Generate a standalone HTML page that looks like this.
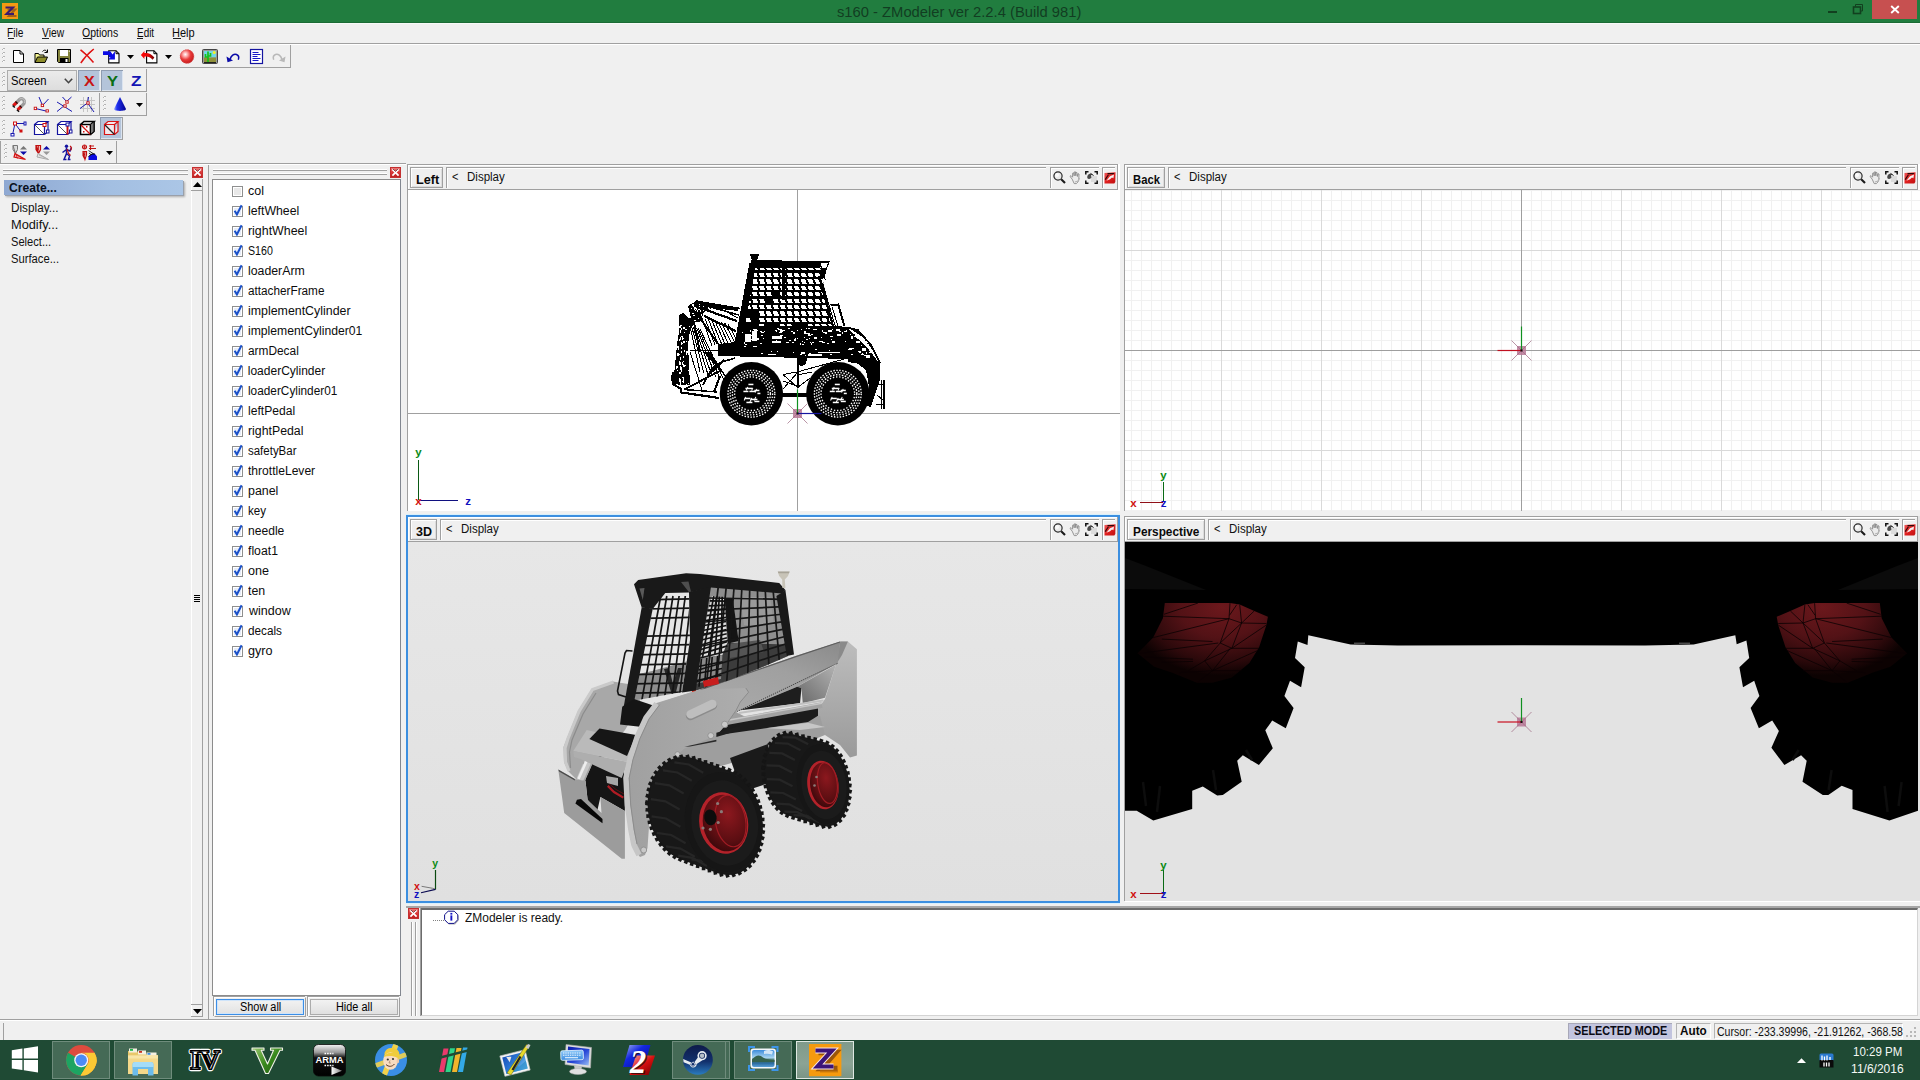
<!DOCTYPE html>
<html><head><meta charset="utf-8"><title>s160 - ZModeler ver 2.2.4 (Build 981)</title>
<style>
*{box-sizing:border-box;margin:0;padding:0}
html,body{width:1920px;height:1080px;overflow:hidden;background:#f0f0f0;font-family:"Liberation Sans",sans-serif;font-size:12px;color:#000}
.a{position:absolute}
.t{position:absolute;white-space:nowrap;transform-origin:0 0;display:block}
.t u{text-decoration:none}
svg{display:block;overflow:visible}
</style></head><body>
<!-- p_chrome.chrome -->
<div class="a" style="left:0px;top:0px;width:1920px;height:22px;background:#217d3f;"></div>
<div class="a" style="left:0px;top:22px;width:1920px;height:1px;background:#1b6b35;"></div>
<div class="a" style="left:0px;top:23px;width:1920px;height:1px;background:#f7faf7;"></div>
<svg class="a" style="left:2px;top:3px" width="16" height="16" viewBox="0 0 16 16"><rect width="16" height="16" fill="#f39a12"/><path d="M5.5 6.5h7.5l-6 6.5h7.5" stroke="#a0611a" stroke-width="2.2" fill="none"/><path d="M3.5 4.5h7.5l-6.5 6.5h7.5" stroke="#3a1a6e" stroke-width="2.1" fill="none"/></svg>
<span class="t" style="left:837.07px;top:4.30px;font-size:15px;line-height:15px;color:#123d22;transform:scaleX(0.9833);">s160 - ZModeler ver 2.2.4 (Build 981)</span>
<div class="a" style="left:1828px;top:11px;width:9px;height:2px;background:#12401f;"></div>
<svg class="a" style="left:1852px;top:3px" width="12" height="12" viewBox="0 0 12 12"><path d="M3.5 3.5v-2h7v6.5h-2" stroke="#12401f" stroke-width="1" fill="none"/><rect x="1.5" y="4" width="7" height="6.5" fill="none" stroke="#12401f" stroke-width="1.6"/></svg>
<div class="a" style="left:1872px;top:0px;width:45px;height:19px;background:#c75050;"></div>
<svg class="a" style="left:1890px;top:5px" width="10" height="9" viewBox="0 0 10 9"><path d="M1.2 1l7.6 7M8.8 1l-7.6 7" stroke="#fff" stroke-width="1.9"/></svg>
<div class="a" style="left:0px;top:24px;width:1920px;height:19px;background:#f0f0f0;"></div>
<span class="t" style="left:7.41px;top:26.84px;font-size:12px;line-height:12px;color:#0a0a0a;transform:scaleX(0.8418);">File</span>
<span class="t" style="left:42.15px;top:26.84px;font-size:12px;line-height:12px;color:#0a0a0a;transform:scaleX(0.8544);">View</span>
<span class="t" style="left:82.31px;top:26.84px;font-size:12px;line-height:12px;color:#0a0a0a;transform:scaleX(0.8743);">Options</span>
<span class="t" style="left:136.72px;top:26.84px;font-size:12px;line-height:12px;color:#0a0a0a;transform:scaleX(0.8279);">Edit</span>
<span class="t" style="left:172.24px;top:26.84px;font-size:12px;line-height:12px;color:#0a0a0a;transform:scaleX(0.9161);">Help</span>
<div class="a" style="left:8px;top:38px;width:6px;height:1px;background:#222;"></div>
<div class="a" style="left:42px;top:38px;width:7px;height:1px;background:#222;"></div>
<div class="a" style="left:83px;top:38px;width:8px;height:1px;background:#222;"></div>
<div class="a" style="left:137px;top:38px;width:6px;height:1px;background:#222;"></div>
<div class="a" style="left:173px;top:38px;width:8px;height:1px;background:#222;"></div>
<div class="a" style="left:0px;top:43px;width:1920px;height:1px;background:#a0a0a0;"></div>
<div class="a" style="left:0px;top:44px;width:1920px;height:1px;background:#fff;"></div>
<!-- p_chrome.toolbars -->
<div class="a" style="left:0px;top:67px;width:291px;height:1px;background:#a0a0a0;"></div><div class="a" style="left:290px;top:45px;width:1px;height:23px;background:#a0a0a0;"></div>
<div class="a" style="left:3px;top:48px;width:2px;height:1px;background:#b4b4b4;"></div><div class="a" style="left:2px;top:49px;width:1px;height:1px;background:#b4b4b4;"></div><div class="a" style="left:3px;top:49px;width:1px;height:1px;background:#fff;"></div><div class="a" style="left:3px;top:52px;width:2px;height:1px;background:#b4b4b4;"></div><div class="a" style="left:2px;top:53px;width:1px;height:1px;background:#b4b4b4;"></div><div class="a" style="left:3px;top:53px;width:1px;height:1px;background:#fff;"></div><div class="a" style="left:3px;top:56px;width:2px;height:1px;background:#b4b4b4;"></div><div class="a" style="left:2px;top:57px;width:1px;height:1px;background:#b4b4b4;"></div><div class="a" style="left:3px;top:57px;width:1px;height:1px;background:#fff;"></div><div class="a" style="left:3px;top:60px;width:2px;height:1px;background:#b4b4b4;"></div><div class="a" style="left:2px;top:61px;width:1px;height:1px;background:#b4b4b4;"></div><div class="a" style="left:3px;top:61px;width:1px;height:1px;background:#fff;"></div>
<svg class="a" style="left:126.5px;top:54.5px" width="7" height="4" viewBox="0 0 7 4"><path d="M0 0h7l-3.5 4z" fill="#000"/></svg>
<svg class="a" style="left:164.5px;top:54.5px" width="7" height="4" viewBox="0 0 7 4"><path d="M0 0h7l-3.5 4z" fill="#000"/></svg>
<div class="a" style="left:0px;top:91px;width:147px;height:1px;background:#a0a0a0;"></div><div class="a" style="left:146px;top:69px;width:1px;height:23px;background:#a0a0a0;"></div>
<div class="a" style="left:3px;top:72px;width:2px;height:1px;background:#b4b4b4;"></div><div class="a" style="left:2px;top:73px;width:1px;height:1px;background:#b4b4b4;"></div><div class="a" style="left:3px;top:73px;width:1px;height:1px;background:#fff;"></div><div class="a" style="left:3px;top:76px;width:2px;height:1px;background:#b4b4b4;"></div><div class="a" style="left:2px;top:77px;width:1px;height:1px;background:#b4b4b4;"></div><div class="a" style="left:3px;top:77px;width:1px;height:1px;background:#fff;"></div><div class="a" style="left:3px;top:80px;width:2px;height:1px;background:#b4b4b4;"></div><div class="a" style="left:2px;top:81px;width:1px;height:1px;background:#b4b4b4;"></div><div class="a" style="left:3px;top:81px;width:1px;height:1px;background:#fff;"></div><div class="a" style="left:3px;top:84px;width:2px;height:1px;background:#b4b4b4;"></div><div class="a" style="left:2px;top:85px;width:1px;height:1px;background:#b4b4b4;"></div><div class="a" style="left:3px;top:85px;width:1px;height:1px;background:#fff;"></div>
<div class="a" style="left:7px;top:70px;width:70px;height:21px;background:linear-gradient(#ebebeb,#dddddd);border:1px solid #adadad;"></div>
<span class="t" style="left:10.67px;top:74.84px;font-size:12px;line-height:12px;color:#000;transform:scaleX(0.9333);">Screen</span>
<svg class="a" style="left:64px;top:78px" width="9" height="6" viewBox="0 0 9 6"><path d="M0.8 0.8l3.7 3.9l3.7-3.9" stroke="#444" stroke-width="1.6" fill="none"/></svg>
<div class="a" style="left:78px;top:70px;width:22px;height:21px;background:#b4c4da;box-shadow:inset 1px 1px 0 #8f9cb0, inset -1px -1px 0 #dbe4f0;"></div>
<div class="a" style="left:101px;top:70px;width:22px;height:21px;background:#b4c4da;box-shadow:inset 1px 1px 0 #8f9cb0, inset -1px -1px 0 #dbe4f0;"></div>
<span class="t" style="left:84.37px;top:73.30px;font-size:15px;line-height:15px;color:#c81414;font-weight:bold;transform:scaleX(1.0769);">X</span>
<span class="t" style="left:106.72px;top:73.30px;font-size:15px;line-height:15px;color:#0a6e14;font-weight:bold;transform:scaleX(1.1053);">Y</span>
<span class="t" style="left:130.50px;top:73.30px;font-size:15px;line-height:15px;color:#1414b4;font-weight:bold;transform:scaleX(1.1429);">Z</span>
<div class="a" style="left:0px;top:115px;width:100px;height:1px;background:#a0a0a0;"></div><div class="a" style="left:99px;top:93px;width:1px;height:23px;background:#a0a0a0;"></div>
<div class="a" style="left:3px;top:96px;width:2px;height:1px;background:#b4b4b4;"></div><div class="a" style="left:2px;top:97px;width:1px;height:1px;background:#b4b4b4;"></div><div class="a" style="left:3px;top:97px;width:1px;height:1px;background:#fff;"></div><div class="a" style="left:3px;top:100px;width:2px;height:1px;background:#b4b4b4;"></div><div class="a" style="left:2px;top:101px;width:1px;height:1px;background:#b4b4b4;"></div><div class="a" style="left:3px;top:101px;width:1px;height:1px;background:#fff;"></div><div class="a" style="left:3px;top:104px;width:2px;height:1px;background:#b4b4b4;"></div><div class="a" style="left:2px;top:105px;width:1px;height:1px;background:#b4b4b4;"></div><div class="a" style="left:3px;top:105px;width:1px;height:1px;background:#fff;"></div><div class="a" style="left:3px;top:108px;width:2px;height:1px;background:#b4b4b4;"></div><div class="a" style="left:2px;top:109px;width:1px;height:1px;background:#b4b4b4;"></div><div class="a" style="left:3px;top:109px;width:1px;height:1px;background:#fff;"></div>
<div class="a" style="left:100px;top:115px;width:47px;height:1px;background:#a0a0a0;"></div><div class="a" style="left:146px;top:93px;width:1px;height:23px;background:#a0a0a0;"></div>
<div class="a" style="left:104px;top:96px;width:2px;height:1px;background:#b4b4b4;"></div><div class="a" style="left:103px;top:97px;width:1px;height:1px;background:#b4b4b4;"></div><div class="a" style="left:104px;top:97px;width:1px;height:1px;background:#fff;"></div><div class="a" style="left:104px;top:100px;width:2px;height:1px;background:#b4b4b4;"></div><div class="a" style="left:103px;top:101px;width:1px;height:1px;background:#b4b4b4;"></div><div class="a" style="left:104px;top:101px;width:1px;height:1px;background:#fff;"></div><div class="a" style="left:104px;top:104px;width:2px;height:1px;background:#b4b4b4;"></div><div class="a" style="left:103px;top:105px;width:1px;height:1px;background:#b4b4b4;"></div><div class="a" style="left:104px;top:105px;width:1px;height:1px;background:#fff;"></div><div class="a" style="left:104px;top:108px;width:2px;height:1px;background:#b4b4b4;"></div><div class="a" style="left:103px;top:109px;width:1px;height:1px;background:#b4b4b4;"></div><div class="a" style="left:104px;top:109px;width:1px;height:1px;background:#fff;"></div>
<svg class="a" style="left:135.5px;top:102.5px" width="7" height="4" viewBox="0 0 7 4"><path d="M0 0h7l-3.5 4z" fill="#000"/></svg>
<div class="a" style="left:0px;top:139px;width:123px;height:1px;background:#a0a0a0;"></div><div class="a" style="left:122px;top:117px;width:1px;height:23px;background:#a0a0a0;"></div>
<div class="a" style="left:3px;top:120px;width:2px;height:1px;background:#b4b4b4;"></div><div class="a" style="left:2px;top:121px;width:1px;height:1px;background:#b4b4b4;"></div><div class="a" style="left:3px;top:121px;width:1px;height:1px;background:#fff;"></div><div class="a" style="left:3px;top:124px;width:2px;height:1px;background:#b4b4b4;"></div><div class="a" style="left:2px;top:125px;width:1px;height:1px;background:#b4b4b4;"></div><div class="a" style="left:3px;top:125px;width:1px;height:1px;background:#fff;"></div><div class="a" style="left:3px;top:128px;width:2px;height:1px;background:#b4b4b4;"></div><div class="a" style="left:2px;top:129px;width:1px;height:1px;background:#b4b4b4;"></div><div class="a" style="left:3px;top:129px;width:1px;height:1px;background:#fff;"></div><div class="a" style="left:3px;top:132px;width:2px;height:1px;background:#b4b4b4;"></div><div class="a" style="left:2px;top:133px;width:1px;height:1px;background:#b4b4b4;"></div><div class="a" style="left:3px;top:133px;width:1px;height:1px;background:#fff;"></div>
<div class="a" style="left:100px;top:117px;width:22px;height:22px;background:#b4c4da;box-shadow:inset 1px 1px 0 #8f9cb0, inset -1px -1px 0 #dbe4f0;"></div>
<div class="a" style="left:0px;top:163px;width:117px;height:1px;background:#a0a0a0;"></div><div class="a" style="left:116px;top:141px;width:1px;height:23px;background:#a0a0a0;"></div><div class="a" style="left:0px;top:141px;width:1px;height:23px;background:#a0a0a0;"></div>
<div class="a" style="left:5px;top:144px;width:2px;height:1px;background:#b4b4b4;"></div><div class="a" style="left:4px;top:145px;width:1px;height:1px;background:#b4b4b4;"></div><div class="a" style="left:5px;top:145px;width:1px;height:1px;background:#fff;"></div><div class="a" style="left:5px;top:148px;width:2px;height:1px;background:#b4b4b4;"></div><div class="a" style="left:4px;top:149px;width:1px;height:1px;background:#b4b4b4;"></div><div class="a" style="left:5px;top:149px;width:1px;height:1px;background:#fff;"></div><div class="a" style="left:5px;top:152px;width:2px;height:1px;background:#b4b4b4;"></div><div class="a" style="left:4px;top:153px;width:1px;height:1px;background:#b4b4b4;"></div><div class="a" style="left:5px;top:153px;width:1px;height:1px;background:#fff;"></div><div class="a" style="left:5px;top:156px;width:2px;height:1px;background:#b4b4b4;"></div><div class="a" style="left:4px;top:157px;width:1px;height:1px;background:#b4b4b4;"></div><div class="a" style="left:5px;top:157px;width:1px;height:1px;background:#fff;"></div>
<svg class="a" style="left:105.5px;top:150.5px" width="7" height="4" viewBox="0 0 7 4"><path d="M0 0h7l-3.5 4z" fill="#000"/></svg>
<div class="a" style="left:117px;top:163px;width:289px;height:1px;background:#a0a0a0;"></div>
<div class="a" style="left:0px;top:164px;width:406px;height:1px;background:#fff;"></div>
<!-- p_panels.leftpanel -->
<div class="a" style="left:3px;top:169px;width:185px;height:1px;background:#fff;"></div><div class="a" style="left:3px;top:170px;width:185px;height:1px;background:#a0a0a0;"></div><div class="a" style="left:3px;top:173px;width:185px;height:1px;background:#fff;"></div><div class="a" style="left:3px;top:174px;width:185px;height:1px;background:#a0a0a0;"></div>
<svg class="a" style="left:192px;top:167px" width="11" height="11" viewBox="0 0 11 11"><defs><linearGradient id="cx192" x1="0" y1="0" x2="0" y2="1"><stop offset="0" stop-color="#f08a8a"/><stop offset="0.45" stop-color="#dc3c3c"/><stop offset="1" stop-color="#b81818"/></linearGradient></defs><rect width="11" height="11" fill="url(#cx192)"/><rect x="0.5" y="0.5" width="10" height="10" fill="none" stroke="#c43030" stroke-width="1"/><path d="M2.4 2.4l6.2 6.2M8.6 2.4l-6.2 6.2" stroke="#fff" stroke-width="1.7"/><path d="M3 2l2.5 2.5M8 2L5.5 4.5" stroke="#401010" stroke-width="0.9" opacity="0.75"/></svg>
<div class="a" style="left:4px;top:180px;width:179px;height:15px;background:linear-gradient(90deg,#8ea8d2,#a3bfe2 60%,#abc6e6);box-shadow:1px 1px 0 #9aa0aa,2px 2px 2px rgba(0,0,0,0.28);"></div>
<span class="t" style="left:8.82px;top:182.02px;font-size:12.5px;line-height:12.5px;color:#0a1020;font-weight:bold;transform:scaleX(0.9688);">Create...</span>
<span class="t" style="left:10.68px;top:201.64px;font-size:12px;line-height:12px;color:#111;transform:scaleX(0.9798);">Display...</span>
<span class="t" style="left:10.60px;top:218.64px;font-size:12px;line-height:12px;color:#111;transform:scaleX(1.0651);">Modify...</span>
<span class="t" style="left:11.08px;top:235.64px;font-size:12px;line-height:12px;color:#111;transform:scaleX(0.9259);">Select...</span>
<span class="t" style="left:11.07px;top:252.64px;font-size:12px;line-height:12px;color:#111;transform:scaleX(0.9358);">Surface...</span>
<div class="a" style="left:191px;top:179px;width:1px;height:838px;background:#fff;"></div>
<div class="a" style="left:202px;top:179px;width:1px;height:838px;background:#a0a0a0;"></div>
<div class="a" style="left:191px;top:190px;width:11px;height:1px;background:#a0a0a0;"></div>
<div class="a" style="left:191px;top:1004px;width:11px;height:1px;background:#a0a0a0;"></div>
<div class="a" style="left:191px;top:1016px;width:12px;height:1px;background:#a0a0a0;"></div>
<svg class="a" style="left:192.5px;top:181.5px" width="9" height="5" viewBox="0 0 9 5"><path d="M0 5l4.5-5l4.5 5z" fill="#000"/></svg>
<svg class="a" style="left:192.5px;top:1008.5px" width="9" height="5" viewBox="0 0 9 5"><path d="M0 0h9l-4.5 5z" fill="#000"/></svg>
<div class="a" style="left:194px;top:595px;width:6px;height:1px;background:#000;"></div>
<div class="a" style="left:194px;top:597px;width:6px;height:1px;background:#000;"></div>
<div class="a" style="left:194px;top:599px;width:6px;height:1px;background:#000;"></div>
<div class="a" style="left:194px;top:601px;width:6px;height:1px;background:#000;"></div>
<div class="a" style="left:208px;top:165px;width:1px;height:854px;background:#a0a0a0;"></div>
<!-- p_panels.objpanel -->
<div class="a" style="left:213px;top:169px;width:174px;height:1px;background:#fff;"></div><div class="a" style="left:213px;top:170px;width:174px;height:1px;background:#a0a0a0;"></div><div class="a" style="left:213px;top:173px;width:174px;height:1px;background:#fff;"></div><div class="a" style="left:213px;top:174px;width:174px;height:1px;background:#a0a0a0;"></div>
<svg class="a" style="left:390px;top:167px" width="11" height="11" viewBox="0 0 11 11"><defs><linearGradient id="cx390" x1="0" y1="0" x2="0" y2="1"><stop offset="0" stop-color="#f08a8a"/><stop offset="0.45" stop-color="#dc3c3c"/><stop offset="1" stop-color="#b81818"/></linearGradient></defs><rect width="11" height="11" fill="url(#cx390)"/><rect x="0.5" y="0.5" width="10" height="10" fill="none" stroke="#c43030" stroke-width="1"/><path d="M2.4 2.4l6.2 6.2M8.6 2.4l-6.2 6.2" stroke="#fff" stroke-width="1.7"/><path d="M3 2l2.5 2.5M8 2L5.5 4.5" stroke="#401010" stroke-width="0.9" opacity="0.75"/></svg>
<div class="a" style="left:212px;top:179px;width:189px;height:817px;background:#fff;border:1px solid #8c8c8c;"></div>
<svg class="a" style="left:232px;top:184px" width="13" height="13" viewBox="0 0 13 13"><rect x="0.5" y="2.5" width="10" height="10" fill="#fff" stroke="#8e8f8f"/><rect x="2" y="4" width="7" height="7" fill="#e8e8e8"/></svg>
<span class="t" style="left:248.08px;top:184.84px;font-size:12px;line-height:12px;color:#0c0c0c;transform:scaleX(1.0382);">col</span>
<svg class="a" style="left:232px;top:204px" width="13" height="13" viewBox="0 0 13 13"><rect x="0.5" y="2.5" width="10" height="10" fill="#fff" stroke="#8e8f8f"/><rect x="2" y="4" width="7" height="7" fill="#e6ecf8"/><path d="M2.6 6.8L4.9 10.4L9.6 1.2" stroke="#1a50c8" stroke-width="2" fill="none" stroke-linejoin="miter"/></svg>
<span class="t" style="left:247.77px;top:204.84px;font-size:12px;line-height:12px;color:#0c0c0c;transform:scaleX(1.0240);">leftWheel</span>
<svg class="a" style="left:232px;top:224px" width="13" height="13" viewBox="0 0 13 13"><rect x="0.5" y="2.5" width="10" height="10" fill="#fff" stroke="#8e8f8f"/><rect x="2" y="4" width="7" height="7" fill="#e6ecf8"/><path d="M2.6 6.8L4.9 10.4L9.6 1.2" stroke="#1a50c8" stroke-width="2" fill="none" stroke-linejoin="miter"/></svg>
<span class="t" style="left:247.76px;top:224.84px;font-size:12px;line-height:12px;color:#0c0c0c;transform:scaleX(1.0314);">rightWheel</span>
<svg class="a" style="left:232px;top:244px" width="13" height="13" viewBox="0 0 13 13"><rect x="0.5" y="2.5" width="10" height="10" fill="#fff" stroke="#8e8f8f"/><rect x="2" y="4" width="7" height="7" fill="#e6ecf8"/><path d="M2.6 6.8L4.9 10.4L9.6 1.2" stroke="#1a50c8" stroke-width="2" fill="none" stroke-linejoin="miter"/></svg>
<span class="t" style="left:248.10px;top:244.84px;font-size:12px;line-height:12px;color:#0c0c0c;transform:scaleX(0.8868);">S160</span>
<svg class="a" style="left:232px;top:264px" width="13" height="13" viewBox="0 0 13 13"><rect x="0.5" y="2.5" width="10" height="10" fill="#fff" stroke="#8e8f8f"/><rect x="2" y="4" width="7" height="7" fill="#e6ecf8"/><path d="M2.6 6.8L4.9 10.4L9.6 1.2" stroke="#1a50c8" stroke-width="2" fill="none" stroke-linejoin="miter"/></svg>
<span class="t" style="left:247.77px;top:264.84px;font-size:12px;line-height:12px;color:#0c0c0c;transform:scaleX(1.0258);">loaderArm</span>
<svg class="a" style="left:232px;top:284px" width="13" height="13" viewBox="0 0 13 13"><rect x="0.5" y="2.5" width="10" height="10" fill="#fff" stroke="#8e8f8f"/><rect x="2" y="4" width="7" height="7" fill="#e6ecf8"/><path d="M2.6 6.8L4.9 10.4L9.6 1.2" stroke="#1a50c8" stroke-width="2" fill="none" stroke-linejoin="miter"/></svg>
<span class="t" style="left:248.11px;top:284.84px;font-size:12px;line-height:12px;color:#0c0c0c;transform:scaleX(0.9797);">attacherFrame</span>
<svg class="a" style="left:232px;top:304px" width="13" height="13" viewBox="0 0 13 13"><rect x="0.5" y="2.5" width="10" height="10" fill="#fff" stroke="#8e8f8f"/><rect x="2" y="4" width="7" height="7" fill="#e6ecf8"/><path d="M2.6 6.8L4.9 10.4L9.6 1.2" stroke="#1a50c8" stroke-width="2" fill="none" stroke-linejoin="miter"/></svg>
<span class="t" style="left:247.76px;top:304.84px;font-size:12px;line-height:12px;color:#0c0c0c;transform:scaleX(1.0318);">implementCylinder</span>
<svg class="a" style="left:232px;top:324px" width="13" height="13" viewBox="0 0 13 13"><rect x="0.5" y="2.5" width="10" height="10" fill="#fff" stroke="#8e8f8f"/><rect x="2" y="4" width="7" height="7" fill="#e6ecf8"/><path d="M2.6 6.8L4.9 10.4L9.6 1.2" stroke="#1a50c8" stroke-width="2" fill="none" stroke-linejoin="miter"/></svg>
<span class="t" style="left:247.78px;top:324.84px;font-size:12px;line-height:12px;color:#0c0c0c;transform:scaleX(1.0146);">implementCylinder01</span>
<svg class="a" style="left:232px;top:344px" width="13" height="13" viewBox="0 0 13 13"><rect x="0.5" y="2.5" width="10" height="10" fill="#fff" stroke="#8e8f8f"/><rect x="2" y="4" width="7" height="7" fill="#e6ecf8"/><path d="M2.6 6.8L4.9 10.4L9.6 1.2" stroke="#1a50c8" stroke-width="2" fill="none" stroke-linejoin="miter"/></svg>
<span class="t" style="left:248.11px;top:344.84px;font-size:12px;line-height:12px;color:#0c0c0c;transform:scaleX(0.9888);">armDecal</span>
<svg class="a" style="left:232px;top:364px" width="13" height="13" viewBox="0 0 13 13"><rect x="0.5" y="2.5" width="10" height="10" fill="#fff" stroke="#8e8f8f"/><rect x="2" y="4" width="7" height="7" fill="#e6ecf8"/><path d="M2.6 6.8L4.9 10.4L9.6 1.2" stroke="#1a50c8" stroke-width="2" fill="none" stroke-linejoin="miter"/></svg>
<span class="t" style="left:247.79px;top:364.84px;font-size:12px;line-height:12px;color:#0c0c0c;">loaderCylinder</span>
<svg class="a" style="left:232px;top:384px" width="13" height="13" viewBox="0 0 13 13"><rect x="0.5" y="2.5" width="10" height="10" fill="#fff" stroke="#8e8f8f"/><rect x="2" y="4" width="7" height="7" fill="#e6ecf8"/><path d="M2.6 6.8L4.9 10.4L9.6 1.2" stroke="#1a50c8" stroke-width="2" fill="none" stroke-linejoin="miter"/></svg>
<span class="t" style="left:247.80px;top:384.84px;font-size:12px;line-height:12px;color:#0c0c0c;transform:scaleX(0.9846);">loaderCylinder01</span>
<svg class="a" style="left:232px;top:404px" width="13" height="13" viewBox="0 0 13 13"><rect x="0.5" y="2.5" width="10" height="10" fill="#fff" stroke="#8e8f8f"/><rect x="2" y="4" width="7" height="7" fill="#e6ecf8"/><path d="M2.6 6.8L4.9 10.4L9.6 1.2" stroke="#1a50c8" stroke-width="2" fill="none" stroke-linejoin="miter"/></svg>
<span class="t" style="left:247.78px;top:404.84px;font-size:12px;line-height:12px;color:#0c0c0c;transform:scaleX(1.0083);">leftPedal</span>
<svg class="a" style="left:232px;top:424px" width="13" height="13" viewBox="0 0 13 13"><rect x="0.5" y="2.5" width="10" height="10" fill="#fff" stroke="#8e8f8f"/><rect x="2" y="4" width="7" height="7" fill="#e6ecf8"/><path d="M2.6 6.8L4.9 10.4L9.6 1.2" stroke="#1a50c8" stroke-width="2" fill="none" stroke-linejoin="miter"/></svg>
<span class="t" style="left:247.77px;top:424.84px;font-size:12px;line-height:12px;color:#0c0c0c;transform:scaleX(1.0250);">rightPedal</span>
<svg class="a" style="left:232px;top:444px" width="13" height="13" viewBox="0 0 13 13"><rect x="0.5" y="2.5" width="10" height="10" fill="#fff" stroke="#8e8f8f"/><rect x="2" y="4" width="7" height="7" fill="#e6ecf8"/><path d="M2.6 6.8L4.9 10.4L9.6 1.2" stroke="#1a50c8" stroke-width="2" fill="none" stroke-linejoin="miter"/></svg>
<span class="t" style="left:248.30px;top:444.84px;font-size:12px;line-height:12px;color:#0c0c0c;transform:scaleX(0.9564);">safetyBar</span>
<svg class="a" style="left:232px;top:464px" width="13" height="13" viewBox="0 0 13 13"><rect x="0.5" y="2.5" width="10" height="10" fill="#fff" stroke="#8e8f8f"/><rect x="2" y="4" width="7" height="7" fill="#e6ecf8"/><path d="M2.6 6.8L4.9 10.4L9.6 1.2" stroke="#1a50c8" stroke-width="2" fill="none" stroke-linejoin="miter"/></svg>
<span class="t" style="left:248.41px;top:464.84px;font-size:12px;line-height:12px;color:#0c0c0c;transform:scaleX(1.0066);">throttleLever</span>
<svg class="a" style="left:232px;top:484px" width="13" height="13" viewBox="0 0 13 13"><rect x="0.5" y="2.5" width="10" height="10" fill="#fff" stroke="#8e8f8f"/><rect x="2" y="4" width="7" height="7" fill="#e6ecf8"/><path d="M2.6 6.8L4.9 10.4L9.6 1.2" stroke="#1a50c8" stroke-width="2" fill="none" stroke-linejoin="miter"/></svg>
<span class="t" style="left:247.82px;top:484.84px;font-size:12px;line-height:12px;color:#0c0c0c;transform:scaleX(1.0337);">panel</span>
<svg class="a" style="left:232px;top:504px" width="13" height="13" viewBox="0 0 13 13"><rect x="0.5" y="2.5" width="10" height="10" fill="#fff" stroke="#8e8f8f"/><rect x="2" y="4" width="7" height="7" fill="#e6ecf8"/><path d="M2.6 6.8L4.9 10.4L9.6 1.2" stroke="#1a50c8" stroke-width="2" fill="none" stroke-linejoin="miter"/></svg>
<span class="t" style="left:247.82px;top:504.84px;font-size:12px;line-height:12px;color:#0c0c0c;transform:scaleX(0.9650);">key</span>
<svg class="a" style="left:232px;top:524px" width="13" height="13" viewBox="0 0 13 13"><rect x="0.5" y="2.5" width="10" height="10" fill="#fff" stroke="#8e8f8f"/><rect x="2" y="4" width="7" height="7" fill="#e6ecf8"/><path d="M2.6 6.8L4.9 10.4L9.6 1.2" stroke="#1a50c8" stroke-width="2" fill="none" stroke-linejoin="miter"/></svg>
<span class="t" style="left:247.78px;top:524.84px;font-size:12px;line-height:12px;color:#0c0c0c;transform:scaleX(1.0072);">needle</span>
<svg class="a" style="left:232px;top:544px" width="13" height="13" viewBox="0 0 13 13"><rect x="0.5" y="2.5" width="10" height="10" fill="#fff" stroke="#8e8f8f"/><rect x="2" y="4" width="7" height="7" fill="#e6ecf8"/><path d="M2.6 6.8L4.9 10.4L9.6 1.2" stroke="#1a50c8" stroke-width="2" fill="none" stroke-linejoin="miter"/></svg>
<span class="t" style="left:248.47px;top:544.84px;font-size:12px;line-height:12px;color:#0c0c0c;transform:scaleX(1.0196);">float1</span>
<svg class="a" style="left:232px;top:564px" width="13" height="13" viewBox="0 0 13 13"><rect x="0.5" y="2.5" width="10" height="10" fill="#fff" stroke="#8e8f8f"/><rect x="2" y="4" width="7" height="7" fill="#e6ecf8"/><path d="M2.6 6.8L4.9 10.4L9.6 1.2" stroke="#1a50c8" stroke-width="2" fill="none" stroke-linejoin="miter"/></svg>
<span class="t" style="left:248.08px;top:564.84px;font-size:12px;line-height:12px;color:#0c0c0c;transform:scaleX(1.0492);">one</span>
<svg class="a" style="left:232px;top:584px" width="13" height="13" viewBox="0 0 13 13"><rect x="0.5" y="2.5" width="10" height="10" fill="#fff" stroke="#8e8f8f"/><rect x="2" y="4" width="7" height="7" fill="#e6ecf8"/><path d="M2.6 6.8L4.9 10.4L9.6 1.2" stroke="#1a50c8" stroke-width="2" fill="none" stroke-linejoin="miter"/></svg>
<span class="t" style="left:248.41px;top:584.84px;font-size:12px;line-height:12px;color:#0c0c0c;transform:scaleX(1.0317);">ten</span>
<svg class="a" style="left:232px;top:604px" width="13" height="13" viewBox="0 0 13 13"><rect x="0.5" y="2.5" width="10" height="10" fill="#fff" stroke="#8e8f8f"/><rect x="2" y="4" width="7" height="7" fill="#e6ecf8"/><path d="M2.6 6.8L4.9 10.4L9.6 1.2" stroke="#1a50c8" stroke-width="2" fill="none" stroke-linejoin="miter"/></svg>
<span class="t" style="left:248.60px;top:604.84px;font-size:12px;line-height:12px;color:#0c0c0c;transform:scaleX(1.0421);">window</span>
<svg class="a" style="left:232px;top:624px" width="13" height="13" viewBox="0 0 13 13"><rect x="0.5" y="2.5" width="10" height="10" fill="#fff" stroke="#8e8f8f"/><rect x="2" y="4" width="7" height="7" fill="#e6ecf8"/><path d="M2.6 6.8L4.9 10.4L9.6 1.2" stroke="#1a50c8" stroke-width="2" fill="none" stroke-linejoin="miter"/></svg>
<span class="t" style="left:248.11px;top:624.84px;font-size:12px;line-height:12px;color:#0c0c0c;transform:scaleX(0.9778);">decals</span>
<svg class="a" style="left:232px;top:644px" width="13" height="13" viewBox="0 0 13 13"><rect x="0.5" y="2.5" width="10" height="10" fill="#fff" stroke="#8e8f8f"/><rect x="2" y="4" width="7" height="7" fill="#e6ecf8"/><path d="M2.6 6.8L4.9 10.4L9.6 1.2" stroke="#1a50c8" stroke-width="2" fill="none" stroke-linejoin="miter"/></svg>
<span class="t" style="left:248.07px;top:644.84px;font-size:12px;line-height:12px;color:#0c0c0c;transform:scaleX(1.0503);">gyro</span>
<div class="a" style="left:214px;top:997px;width:92px;height:20px;background:#f0f0f0;border:1px solid #a0a0a0;border-top-color:#fff;border-left-color:#fff;box-shadow:-1px -1px 0 #a0a0a0;"></div>
<div class="a" style="left:216px;top:999px;width:88px;height:16px;background:linear-gradient(#f2f2f2,#e2e2e2);border:1px solid #3c8ee6;box-shadow:inset 0 0 0 1px #cfe4fa;"></div>
<div class="a" style="left:308px;top:997px;width:92px;height:20px;background:#f0f0f0;border:1px solid #a0a0a0;border-top-color:#fff;border-left-color:#fff;box-shadow:-1px -1px 0 #a0a0a0;"></div>
<div class="a" style="left:310px;top:999px;width:88px;height:16px;background:linear-gradient(#f2f2f2,#e0e0e0);border:1px solid #acacac;"></div>
<span class="t" style="left:239.89px;top:1001.34px;font-size:12px;line-height:12px;color:#000;transform:scaleX(0.9091);">Show all</span>
<span class="t" style="left:335.75px;top:1001.34px;font-size:12px;line-height:12px;color:#000;transform:scaleX(0.9083);">Hide all</span>
<div class="a" style="left:400px;top:179px;width:1px;height:817px;background:#828790;"></div>
<!-- p_views.frames -->
<div class="a" style="left:407px;top:164px;width:713px;height:347px;background:#fff;border-left:1px solid #a0a0a0;"></div>
<div class="a" style="left:1124px;top:164px;width:796px;height:347px;background:#fff;border-left:1px solid #a0a0a0;"></div>
<div class="a" style="left:1124px;top:516px;width:796px;height:385px;background:#e3e3e3;border-left:1px solid #a0a0a0;"></div>
<div class="a" style="left:1125px;top:901px;width:795px;height:1px;background:#fff;"></div>
<div class="a" style="left:406px;top:515px;width:714px;height:388px;background:#e3e3e3;border:2px solid #3c8fe0;box-shadow:0 -1px 0 #d8f0fc,0 1px 0 #d8f0fc;"></div>
<div class="a" style="left:407px;top:164px;width:711px;height:26px;background:#f0f0f0;border:1px solid #a0a0a0;box-shadow:inset 1px 1px 0 #fff;"></div>
<div class="a" style="left:410px;top:167px;width:33px;height:21px;background:#efefef;border:1px solid #a0a0a0;box-shadow:inset 1px 1px 0 #fff,inset -1px -1px 0 #dcdcdc;"></div>
<span class="t" style="left:415.75px;top:173.00px;font-size:13px;line-height:13px;color:#0a0a0a;font-weight:bold;transform:scaleX(0.9732);">Left</span>
<div class="a" style="left:446px;top:167px;width:600px;height:21px;background:#f0f0f0;border-left:1px solid #a0a0a0;border-top:1px solid #a0a0a0;box-shadow:inset 1px 1px 0 #fff;"></div>
<span class="t" style="left:452.08px;top:170.84px;font-size:12px;line-height:12px;color:#111;transform:scaleX(0.9191);">&lt;</span>
<span class="t" style="left:466.80px;top:170.84px;font-size:12px;line-height:12px;color:#111;transform:scaleX(0.9600);">Display</span>
<div class="a" style="left:1050px;top:167px;width:49px;height:21px;background:#f0f0f0;border-left:1px solid #a0a0a0;border-top:1px solid #a0a0a0;box-shadow:inset 1px 1px 0 #fff;"></div>
<svg class="a" style="left:1053px;top:171px" width="13" height="13" viewBox="0 0 13 13"><circle cx="5" cy="5" r="4.1" fill="#e9e9e9" stroke="#2a2a2a" stroke-width="1.2"/><circle cx="4" cy="4" r="2" fill="#fbfbfb" opacity="0.9"/><path d="M8.2 8.2L12 12" stroke="#1a1a1a" stroke-width="2.1"/></svg>
<svg class="a" style="left:1069px;top:171px" width="13" height="13" viewBox="0 0 13 13"><path d="M3.2 8.2L1 5.4l1-0.8l1.6 1.6V2.2l1.1-0.3l0.5 3V1l1.2-0.2l0.4 4V1.4l1.1 0.1l0.5 4l0.6-2.8l1 0.3l-0.2 5.2c0 2-1.4 3.6-2.4 4.4H5.2z" fill="#ececec" stroke="#8a8a8a" stroke-width="0.9" stroke-linejoin="round"/><path d="M6 11l3-1l1.6-3" stroke="#b4b4b4" stroke-width="1.2" fill="none"/></svg>
<svg class="a" style="left:1085px;top:171px" width="13" height="13" viewBox="0 0 13 13"><rect x="6" y="5" width="6" height="6" fill="#dcdcdc"/><path d="M0.8 3.5V0.8H3.5M9.5 0.8h2.7V3.5M12.2 9.5v2.7H9.5M3.5 12.2H0.8V9.5" stroke="#111" stroke-width="1.5" fill="none"/><path d="M2.4 7.2c-0.6-2.6 1-4.6 3.2-4.8l2.4 1.2l-2 0.6l0.4 2.6c-1.6 1.4-3 1.6-4 0.4z" fill="#4a4a4a"/><path d="M5.6 2.4l3 2.2" stroke="#2a2a2a" stroke-width="1"/></svg>
<div class="a" style="left:1102px;top:167px;width:13px;height:21px;background:#f0f0f0;border-left:1px solid #a0a0a0;border-top:1px solid #a0a0a0;box-shadow:inset 1px 1px 0 #fff;"></div>
<svg class="a" style="left:1104px;top:172px" width="12" height="12" viewBox="0 0 12 12"><defs><linearGradient id="ri1104" x1="0" y1="0" x2="1" y2="1"><stop offset="0" stop-color="#f05a5a"/><stop offset="0.5" stop-color="#e02020"/><stop offset="1" stop-color="#c01010"/></linearGradient></defs><path d="M0.5 1L11.5 0.3L11.3 10l-1 1.5H0.5z" fill="url(#ri1104)"/><path d="M3.5 1.6h6.6" stroke="#2a0a0a" stroke-width="1.2"/><path d="M1.2 7.6L4.4 2.8" stroke="#2a0a0a" stroke-width="1.1"/><path d="M2.4 8.8L6 4.2L10 2.4L9.4 6.2L8 5.4L6 7.2z" fill="#f6f0f0"/></svg>
<div class="a" style="left:1124px;top:164px;width:794px;height:26px;background:#f0f0f0;border:1px solid #a0a0a0;box-shadow:inset 1px 1px 0 #fff;"></div>
<div class="a" style="left:1127px;top:167px;width:38px;height:21px;background:#efefef;border:1px solid #a0a0a0;box-shadow:inset 1px 1px 0 #fff,inset -1px -1px 0 #dcdcdc;"></div>
<span class="t" style="left:1132.84px;top:173.00px;font-size:13px;line-height:13px;color:#0a0a0a;font-weight:bold;transform:scaleX(0.8661);">Back</span>
<div class="a" style="left:1168px;top:167px;width:678px;height:21px;background:#f0f0f0;border-left:1px solid #a0a0a0;border-top:1px solid #a0a0a0;box-shadow:inset 1px 1px 0 #fff;"></div>
<span class="t" style="left:1174.08px;top:170.84px;font-size:12px;line-height:12px;color:#111;transform:scaleX(0.9191);">&lt;</span>
<span class="t" style="left:1188.80px;top:170.84px;font-size:12px;line-height:12px;color:#111;transform:scaleX(0.9600);">Display</span>
<div class="a" style="left:1850px;top:167px;width:49px;height:21px;background:#f0f0f0;border-left:1px solid #a0a0a0;border-top:1px solid #a0a0a0;box-shadow:inset 1px 1px 0 #fff;"></div>
<svg class="a" style="left:1853px;top:171px" width="13" height="13" viewBox="0 0 13 13"><circle cx="5" cy="5" r="4.1" fill="#e9e9e9" stroke="#2a2a2a" stroke-width="1.2"/><circle cx="4" cy="4" r="2" fill="#fbfbfb" opacity="0.9"/><path d="M8.2 8.2L12 12" stroke="#1a1a1a" stroke-width="2.1"/></svg>
<svg class="a" style="left:1869px;top:171px" width="13" height="13" viewBox="0 0 13 13"><path d="M3.2 8.2L1 5.4l1-0.8l1.6 1.6V2.2l1.1-0.3l0.5 3V1l1.2-0.2l0.4 4V1.4l1.1 0.1l0.5 4l0.6-2.8l1 0.3l-0.2 5.2c0 2-1.4 3.6-2.4 4.4H5.2z" fill="#ececec" stroke="#8a8a8a" stroke-width="0.9" stroke-linejoin="round"/><path d="M6 11l3-1l1.6-3" stroke="#b4b4b4" stroke-width="1.2" fill="none"/></svg>
<svg class="a" style="left:1885px;top:171px" width="13" height="13" viewBox="0 0 13 13"><rect x="6" y="5" width="6" height="6" fill="#dcdcdc"/><path d="M0.8 3.5V0.8H3.5M9.5 0.8h2.7V3.5M12.2 9.5v2.7H9.5M3.5 12.2H0.8V9.5" stroke="#111" stroke-width="1.5" fill="none"/><path d="M2.4 7.2c-0.6-2.6 1-4.6 3.2-4.8l2.4 1.2l-2 0.6l0.4 2.6c-1.6 1.4-3 1.6-4 0.4z" fill="#4a4a4a"/><path d="M5.6 2.4l3 2.2" stroke="#2a2a2a" stroke-width="1"/></svg>
<div class="a" style="left:1902px;top:167px;width:13px;height:21px;background:#f0f0f0;border-left:1px solid #a0a0a0;border-top:1px solid #a0a0a0;box-shadow:inset 1px 1px 0 #fff;"></div>
<svg class="a" style="left:1904px;top:172px" width="12" height="12" viewBox="0 0 12 12"><defs><linearGradient id="ri1904" x1="0" y1="0" x2="1" y2="1"><stop offset="0" stop-color="#f05a5a"/><stop offset="0.5" stop-color="#e02020"/><stop offset="1" stop-color="#c01010"/></linearGradient></defs><path d="M0.5 1L11.5 0.3L11.3 10l-1 1.5H0.5z" fill="url(#ri1904)"/><path d="M3.5 1.6h6.6" stroke="#2a0a0a" stroke-width="1.2"/><path d="M1.2 7.6L4.4 2.8" stroke="#2a0a0a" stroke-width="1.1"/><path d="M2.4 8.8L6 4.2L10 2.4L9.4 6.2L8 5.4L6 7.2z" fill="#f6f0f0"/></svg>
<div class="a" style="left:407px;top:516px;width:711px;height:26px;background:#f0f0f0;border:1px solid #a0a0a0;box-shadow:inset 1px 1px 0 #fff;"></div>
<div class="a" style="left:410px;top:519px;width:27px;height:21px;background:#efefef;border:1px solid #a0a0a0;box-shadow:inset 1px 1px 0 #fff,inset -1px -1px 0 #dcdcdc;"></div>
<span class="t" style="left:416.20px;top:525.00px;font-size:13px;line-height:13px;color:#0a0a0a;font-weight:bold;transform:scaleX(0.9613);">3D</span>
<div class="a" style="left:440px;top:519px;width:606px;height:21px;background:#f0f0f0;border-left:1px solid #a0a0a0;border-top:1px solid #a0a0a0;box-shadow:inset 1px 1px 0 #fff;"></div>
<span class="t" style="left:446.08px;top:522.84px;font-size:12px;line-height:12px;color:#111;transform:scaleX(0.9191);">&lt;</span>
<span class="t" style="left:460.80px;top:522.84px;font-size:12px;line-height:12px;color:#111;transform:scaleX(0.9600);">Display</span>
<div class="a" style="left:1050px;top:519px;width:49px;height:21px;background:#f0f0f0;border-left:1px solid #a0a0a0;border-top:1px solid #a0a0a0;box-shadow:inset 1px 1px 0 #fff;"></div>
<svg class="a" style="left:1053px;top:523px" width="13" height="13" viewBox="0 0 13 13"><circle cx="5" cy="5" r="4.1" fill="#e9e9e9" stroke="#2a2a2a" stroke-width="1.2"/><circle cx="4" cy="4" r="2" fill="#fbfbfb" opacity="0.9"/><path d="M8.2 8.2L12 12" stroke="#1a1a1a" stroke-width="2.1"/></svg>
<svg class="a" style="left:1069px;top:523px" width="13" height="13" viewBox="0 0 13 13"><path d="M3.2 8.2L1 5.4l1-0.8l1.6 1.6V2.2l1.1-0.3l0.5 3V1l1.2-0.2l0.4 4V1.4l1.1 0.1l0.5 4l0.6-2.8l1 0.3l-0.2 5.2c0 2-1.4 3.6-2.4 4.4H5.2z" fill="#ececec" stroke="#8a8a8a" stroke-width="0.9" stroke-linejoin="round"/><path d="M6 11l3-1l1.6-3" stroke="#b4b4b4" stroke-width="1.2" fill="none"/></svg>
<svg class="a" style="left:1085px;top:523px" width="13" height="13" viewBox="0 0 13 13"><rect x="6" y="5" width="6" height="6" fill="#dcdcdc"/><path d="M0.8 3.5V0.8H3.5M9.5 0.8h2.7V3.5M12.2 9.5v2.7H9.5M3.5 12.2H0.8V9.5" stroke="#111" stroke-width="1.5" fill="none"/><path d="M2.4 7.2c-0.6-2.6 1-4.6 3.2-4.8l2.4 1.2l-2 0.6l0.4 2.6c-1.6 1.4-3 1.6-4 0.4z" fill="#4a4a4a"/><path d="M5.6 2.4l3 2.2" stroke="#2a2a2a" stroke-width="1"/></svg>
<div class="a" style="left:1102px;top:519px;width:13px;height:21px;background:#f0f0f0;border-left:1px solid #a0a0a0;border-top:1px solid #a0a0a0;box-shadow:inset 1px 1px 0 #fff;"></div>
<svg class="a" style="left:1104px;top:524px" width="12" height="12" viewBox="0 0 12 12"><defs><linearGradient id="ri1104" x1="0" y1="0" x2="1" y2="1"><stop offset="0" stop-color="#f05a5a"/><stop offset="0.5" stop-color="#e02020"/><stop offset="1" stop-color="#c01010"/></linearGradient></defs><path d="M0.5 1L11.5 0.3L11.3 10l-1 1.5H0.5z" fill="url(#ri1104)"/><path d="M3.5 1.6h6.6" stroke="#2a0a0a" stroke-width="1.2"/><path d="M1.2 7.6L4.4 2.8" stroke="#2a0a0a" stroke-width="1.1"/><path d="M2.4 8.8L6 4.2L10 2.4L9.4 6.2L8 5.4L6 7.2z" fill="#f6f0f0"/></svg>
<div class="a" style="left:1124px;top:516px;width:794px;height:26px;background:#f0f0f0;border:1px solid #a0a0a0;box-shadow:inset 1px 1px 0 #fff;"></div>
<div class="a" style="left:1127px;top:519px;width:78px;height:21px;background:#efefef;border:1px solid #a0a0a0;box-shadow:inset 1px 1px 0 #fff,inset -1px -1px 0 #dcdcdc;"></div>
<span class="t" style="left:1132.70px;top:525.00px;font-size:13px;line-height:13px;color:#0a0a0a;font-weight:bold;transform:scaleX(0.9095);">Perspective</span>
<div class="a" style="left:1208px;top:519px;width:638px;height:21px;background:#f0f0f0;border-left:1px solid #a0a0a0;border-top:1px solid #a0a0a0;box-shadow:inset 1px 1px 0 #fff;"></div>
<span class="t" style="left:1214.08px;top:522.84px;font-size:12px;line-height:12px;color:#111;transform:scaleX(0.9191);">&lt;</span>
<span class="t" style="left:1228.80px;top:522.84px;font-size:12px;line-height:12px;color:#111;transform:scaleX(0.9600);">Display</span>
<div class="a" style="left:1850px;top:519px;width:49px;height:21px;background:#f0f0f0;border-left:1px solid #a0a0a0;border-top:1px solid #a0a0a0;box-shadow:inset 1px 1px 0 #fff;"></div>
<svg class="a" style="left:1853px;top:523px" width="13" height="13" viewBox="0 0 13 13"><circle cx="5" cy="5" r="4.1" fill="#e9e9e9" stroke="#2a2a2a" stroke-width="1.2"/><circle cx="4" cy="4" r="2" fill="#fbfbfb" opacity="0.9"/><path d="M8.2 8.2L12 12" stroke="#1a1a1a" stroke-width="2.1"/></svg>
<svg class="a" style="left:1869px;top:523px" width="13" height="13" viewBox="0 0 13 13"><path d="M3.2 8.2L1 5.4l1-0.8l1.6 1.6V2.2l1.1-0.3l0.5 3V1l1.2-0.2l0.4 4V1.4l1.1 0.1l0.5 4l0.6-2.8l1 0.3l-0.2 5.2c0 2-1.4 3.6-2.4 4.4H5.2z" fill="#ececec" stroke="#8a8a8a" stroke-width="0.9" stroke-linejoin="round"/><path d="M6 11l3-1l1.6-3" stroke="#b4b4b4" stroke-width="1.2" fill="none"/></svg>
<svg class="a" style="left:1885px;top:523px" width="13" height="13" viewBox="0 0 13 13"><rect x="6" y="5" width="6" height="6" fill="#dcdcdc"/><path d="M0.8 3.5V0.8H3.5M9.5 0.8h2.7V3.5M12.2 9.5v2.7H9.5M3.5 12.2H0.8V9.5" stroke="#111" stroke-width="1.5" fill="none"/><path d="M2.4 7.2c-0.6-2.6 1-4.6 3.2-4.8l2.4 1.2l-2 0.6l0.4 2.6c-1.6 1.4-3 1.6-4 0.4z" fill="#4a4a4a"/><path d="M5.6 2.4l3 2.2" stroke="#2a2a2a" stroke-width="1"/></svg>
<div class="a" style="left:1902px;top:519px;width:13px;height:21px;background:#f0f0f0;border-left:1px solid #a0a0a0;border-top:1px solid #a0a0a0;box-shadow:inset 1px 1px 0 #fff;"></div>
<svg class="a" style="left:1904px;top:524px" width="12" height="12" viewBox="0 0 12 12"><defs><linearGradient id="ri1904" x1="0" y1="0" x2="1" y2="1"><stop offset="0" stop-color="#f05a5a"/><stop offset="0.5" stop-color="#e02020"/><stop offset="1" stop-color="#c01010"/></linearGradient></defs><path d="M0.5 1L11.5 0.3L11.3 10l-1 1.5H0.5z" fill="url(#ri1904)"/><path d="M3.5 1.6h6.6" stroke="#2a0a0a" stroke-width="1.2"/><path d="M1.2 7.6L4.4 2.8" stroke="#2a0a0a" stroke-width="1.1"/><path d="M2.4 8.8L6 4.2L10 2.4L9.4 6.2L8 5.4L6 7.2z" fill="#f6f0f0"/></svg>
<div class="a" style="left:406px;top:515px;width:714px;height:2px;background:#3c8fe0;"></div>
<div class="a" style="left:406px;top:515px;width:2px;height:388px;background:#3c8fe0;"></div>
<div class="a" style="left:1118px;top:515px;width:2px;height:388px;background:#3c8fe0;"></div>
<!-- p_bottom.msg -->
<div class="a" style="left:406px;top:906px;width:1514px;height:2px;background:#a6a6a6;"></div>
<div class="a" style="left:420px;top:908px;width:1498px;height:108px;background:#fff;border-top:2px solid #6c6c6c;border-left:2px solid #6c6c6c;border-right:1px solid #d4d4d4;border-bottom:1px solid #d4d4d4;"></div>
<div class="a" style="left:420px;top:908px;width:1px;height:108px;background:#a0a0a0;"></div>
<svg class="a" style="left:408px;top:908px" width="11" height="11" viewBox="0 0 11 11"><defs><linearGradient id="cx408" x1="0" y1="0" x2="0" y2="1"><stop offset="0" stop-color="#f08a8a"/><stop offset="0.45" stop-color="#dc3c3c"/><stop offset="1" stop-color="#b81818"/></linearGradient></defs><rect width="11" height="11" fill="url(#cx408)"/><rect x="0.5" y="0.5" width="10" height="10" fill="none" stroke="#c43030" stroke-width="1"/><path d="M2.4 2.4l6.2 6.2M8.6 2.4l-6.2 6.2" stroke="#fff" stroke-width="1.7"/><path d="M3 2l2.5 2.5M8 2L5.5 4.5" stroke="#401010" stroke-width="0.9" opacity="0.75"/></svg>
<div class="a" style="left:411px;top:922px;width:1px;height:94px;background:#a0a0a0;"></div><div class="a" style="left:412px;top:922px;width:1px;height:94px;background:#fff;"></div><div class="a" style="left:415px;top:922px;width:1px;height:94px;background:#a0a0a0;"></div><div class="a" style="left:416px;top:922px;width:1px;height:94px;background:#fff;"></div>
<div class="a" style="left:433px;top:920px;width:11px;height:1px;background:repeating-linear-gradient(90deg,#808080 0 1px,transparent 1px 2px)"></div>
<svg class="a" style="left:443px;top:910px" width="17" height="16" viewBox="0 0 17 16"><path d="M6 2.3h6l3.6 3.5v5l-3.6 3.7h-6L2.4 10.8v-5z" fill="#9a9a9a" opacity="0.8"/><path d="M5.2 1.2h6l3.6 3.5v5l-3.6 3.7h-6L1.6 9.7v-5z" fill="#fff" stroke="#10108a" stroke-width="1"/><rect x="7.4" y="5.4" width="1.9" height="5.2" fill="#1414c8"/><rect x="7.4" y="2.9" width="1.9" height="1.7" fill="#1414c8"/></svg>
<span class="t" style="left:464.84px;top:912.42px;font-size:12.5px;line-height:12.5px;color:#111;transform:scaleX(0.9572);">ZModeler is ready.</span>
<!-- p_bottom.status -->
<div class="a" style="left:0px;top:1019px;width:1920px;height:1px;background:#a0a0a0;"></div>
<div class="a" style="left:0px;top:1020px;width:1920px;height:1px;background:#fff;"></div>
<div class="a" style="left:0px;top:1021px;width:1920px;height:19px;background:#f0f0f0;"></div>
<div class="a" style="left:3px;top:1023px;width:1px;height:17px;background:#a0a0a0;"></div>
<div class="a" style="left:1568px;top:1023px;width:104px;height:16px;background:#c2c4de;border-top:1px solid #a8a8b8;border-left:1px solid #a8a8b8;"></div>
<span class="t" style="left:1573.72px;top:1025.34px;font-size:12px;line-height:12px;color:#0a0a14;font-weight:bold;transform:scaleX(0.9019);">SELECTED MODE</span>
<div class="a" style="left:1676px;top:1023px;width:35px;height:16px;background:#f0f0f0;border:1px solid #b4b4b4;border-bottom-color:#fff;border-right-color:#fff;"></div>
<span class="t" style="left:1680.19px;top:1025.34px;font-size:12px;line-height:12px;color:#0a0a0a;font-weight:bold;transform:scaleX(0.9788);">Auto</span>
<div class="a" style="left:1714px;top:1023px;width:189px;height:16px;background:#f0f0f0;border:1px solid #b4b4b4;border-bottom-color:#fff;border-right-color:#fff;"></div>
<span class="t" style="left:1716.51px;top:1025.64px;font-size:12px;line-height:12px;color:#111;transform:scaleX(0.8791);">Cursor: -233.39996, -21.91262, -368.58</span>
<div class="a" style="left:1914px;top:1027px;width:2px;height:2px;background:#b8b8b8;"></div>
<div class="a" style="left:1910px;top:1031px;width:2px;height:2px;background:#b8b8b8;"></div>
<div class="a" style="left:1914px;top:1031px;width:2px;height:2px;background:#b8b8b8;"></div>
<div class="a" style="left:1906px;top:1035px;width:2px;height:2px;background:#b8b8b8;"></div>
<div class="a" style="left:1910px;top:1035px;width:2px;height:2px;background:#b8b8b8;"></div>
<div class="a" style="left:1914px;top:1035px;width:2px;height:2px;background:#b8b8b8;"></div>
<!-- p_bottom.taskbar -->
<div class="a" style="left:0px;top:1040px;width:1920px;height:40px;background:#1f4a34;"></div>
<svg class="a" style="left:11px;top:1046px" width="28" height="27" viewBox="0 0 28 27"><path d="M0.8 4.2L11.4 2.6V12.6H0.8zM12.8 2.4L27 0.2V12.6H12.8zM0.8 14H11.4V24L0.8 22.4zM12.8 14H27V26.4L12.8 24.2z" fill="#fff"/></svg>
<div class="a" style="left:52px;top:1041px;width:58px;height:38px;background:#456a56;border:1px solid #6f8c7c;"></div>
<div class="a" style="left:114px;top:1041px;width:58px;height:38px;background:#456a56;border:1px solid #6f8c7c;"></div>
<div class="a" style="left:672px;top:1041px;width:54px;height:38px;background:#456a56;border:1px solid #6f8c7c;"></div>
<div class="a" style="left:726px;top:1041px;width:4px;height:38px;background:#456a56;border:1px solid #6f8c7c;border-left:none;"></div>
<div class="a" style="left:734px;top:1041px;width:58px;height:38px;background:#456a56;border:1px solid #6f8c7c;"></div>
<div class="a" style="left:796px;top:1041px;width:58px;height:38px;background:linear-gradient(180deg,#7f9a8a,#8ba394 60%,#7b9585);border:1px solid #dfe8e2;"></div>
<svg class="a" style="left:1797px;top:1058px" width="9" height="5" viewBox="0 0 9 5"><path d="M0 5L4.5 0.3L9 5z" fill="#fff"/></svg>
<svg class="a" style="left:1819px;top:1053px" width="15" height="15" viewBox="0 0 15 15"><rect x="0.5" y="0.5" width="14" height="8" rx="1.5" fill="#2a7ad0"/><rect x="0.5" y="7" width="14" height="7.5" fill="#0a0a0a"/><path d="M3 2.5v5M5.5 3.5v4M8 2.5v5M11 4v3" stroke="#fff" stroke-width="1.3"/><path d="M5 9.5v4M7.5 9.5v4M10 9.5v4" stroke="#fff" stroke-width="1.3"/></svg>
<span class="t" style="left:1853.06px;top:1046.44px;font-size:12px;line-height:12px;color:#f4f8f4;transform:scaleX(0.9596);">10:29 PM</span>
<span class="t" style="left:1851.12px;top:1063.24px;font-size:12px;line-height:12px;color:#f4f8f4;">11/6/2016</span>
<!-- p_task.taskicons -->
<svg class="a" style="left:66px;top:1044.5px" width="30.5" height="30.5" viewBox="0 0 100 100"><circle cx="50" cy="50" r="50" fill="#dd4b3e"/><path d="M50 50L6.700 25A50 50 0 0 0 48 99.960L71.650 62.500z" fill="#1da462"/><path d="M50 50L93.300 25H50z M93.300 25A50 50 0 0 1 48 99.960L71.650 62.500A25 25 0 0 0 71.650 37.500L50 25z" fill="#fcc934"/><path d="M93.300 25A50 50 0 0 1 48 99.960L71.650 62.500A25 25 0 0 0 50 25z" fill="#fcc934"/><circle cx="50" cy="50" r="23" fill="#f4f4f4"/><circle cx="50" cy="50" r="18.500" fill="#4c8bf5"/></svg>
<svg class="a" style="left:126px;top:1046px" width="34" height="30" viewBox="0 0 34 30"><path d="M2 5h9l2 2h6l2 2h11v18H2z" fill="#e8c86a"/><rect x="3" y="2.500" width="8" height="4" fill="#f4f0e0"/><rect x="4" y="3" width="3" height="1.800" fill="#1fb848"/><rect x="12" y="4.500" width="8" height="4" fill="#f4f0e0"/><rect x="13" y="5" width="3" height="1.800" fill="#c83020"/><rect x="20.500" y="6.500" width="10" height="4" fill="#f4f0e0"/><rect x="21.500" y="7" width="3" height="1.800" fill="#3c8ee0"/><path d="M2 9.500h30v18.500H2z" fill="#f4d88a"/><path d="M2 9.500h30v3H2z" fill="#f8e6a8"/><path d="M6.500 18.500c0-1.500 1-2.500 2.500-2.500h16c1.500 0 2.500 1 2.500 2.500v11h-5.500v-6.500h-10v6.500h-5.500z" fill="#6cbcec"/><path d="M6.500 19c0-1.800 1-3 2.500-3h16c1.500 0 2.500 1.200 2.500 3v2h-21z" fill="#a4dcf8"/></svg>
<svg class="a" style="left:188px;top:1047px" width="34" height="25" viewBox="0 0 34 25"><g font-family="Liberation Serif,serif" font-weight="bold" font-size="27" text-anchor="middle"><text x="17" y="21.500" fill="none" stroke="#fff" stroke-width="4.500" stroke-linejoin="round" textLength="30" lengthAdjust="spacingAndGlyphs">IV</text><text x="17" y="21.500" fill="#000" stroke="#000" stroke-width="2.200" textLength="30" lengthAdjust="spacingAndGlyphs">IV</text><text x="17" y="21.500" fill="#fff" stroke="#000" stroke-width="0.900" textLength="30" lengthAdjust="spacingAndGlyphs">IV</text><text x="17" y="21.500" fill="#000" transform="translate(3.4 3.9) scale(0.8)" textLength="30" lengthAdjust="spacingAndGlyphs">IV</text></g></svg>
<svg class="a" style="left:251px;top:1047px" width="33" height="28" viewBox="0 0 33 28"><defs><linearGradient id="gv" x1="0" y1="0" x2="1" y2="1"><stop offset="0" stop-color="#9cc870"/><stop offset="0.5" stop-color="#3a8a1e"/><stop offset="1" stop-color="#1e5a10"/></linearGradient></defs><path d="M1 1h12v2.200h-2.800L16.500 17L22.500 3.200H19.500V1h12v2.200h-2.500L17.500 26.500h-3L4 3.200H1z" fill="url(#gv)" stroke="#f0f0e8" stroke-width="1.100" stroke-linejoin="round"/></svg>
<svg class="a" style="left:312.5px;top:1043.5px" width="33" height="32.5" viewBox="0 0 33 32.5"><defs><linearGradient id="ga" x1="0" y1="0" x2="0" y2="1"><stop offset="0" stop-color="#f4f4f4"/><stop offset="0.250" stop-color="#9a9a9a"/><stop offset="0.420" stop-color="#101010"/><stop offset="1" stop-color="#000"/></linearGradient><linearGradient id="gp" x1="0" y1="0" x2="1" y2="0"><stop offset="0" stop-color="#fff"/><stop offset="1" stop-color="#7a7a7a"/></linearGradient></defs><rect x="0.500" y="0.500" width="32" height="31.500" rx="5" fill="url(#ga)" stroke="#0a0a0a" stroke-width="0.800"/><text x="16.500" y="19" font-family="Liberation Sans,sans-serif" font-weight="bold" font-size="9.500" fill="#fff" text-anchor="middle" textLength="28" lengthAdjust="spacingAndGlyphs">ARMA</text><path d="M11.500 9.500h9M11.500 21.500h9" stroke="#fff" stroke-width="1.300" stroke-dasharray="1.600 1"/><path d="M18.500 22.500l10.500 4.250l-10.500 4.250z" fill="url(#gp)"/></svg>
<svg class="a" style="left:375px;top:1043.75px" width="32" height="32" viewBox="0 0 32 32"><defs><clipPath id="fc"><circle cx="16" cy="16" r="16"/></clipPath></defs><circle cx="16" cy="16" r="16" fill="#3a8ee4"/><g clip-path="url(#fc)"><path d="M19 -2l5 2L11 34l-5-2z" fill="#f2d24a"/><path d="M-2 20l3 4L34 12l-3-4z" fill="#f2d24a" opacity="0.900"/></g><path d="M9.500 9c1-3.500 4-5.500 7.500-5l1.500-1.500l1 2c3 0.500 5 3 5 6.500l-1 3.500l-14 0.500z" fill="#f0cc3c"/><ellipse cx="15.500" cy="17" rx="7.300" ry="8.800" fill="#f8dcc0"/><path d="M8.500 13c2-4 8-5.500 13-3l1 4c-4-2.500-9-2.500-14-1z" fill="#f0cc3c"/><circle cx="12.800" cy="15.500" r="1.100" fill="#333"/><circle cx="18" cy="15" r="1.100" fill="#333"/><path d="M11 20.500c2.500 2.500 6 2.500 8.500-0.500" stroke="#5a3a2a" stroke-width="1" fill="none"/><path d="M15 16.500l-1 2.500h1.800" stroke="#b08868" stroke-width="0.800" fill="none"/><ellipse cx="22.800" cy="17" rx="1.300" ry="2.200" fill="#f0c8a8"/></svg>
<svg class="a" style="left:438px;top:1047px" width="30" height="26" viewBox="0 0 30 26"><defs><clipPath id="sc"><path d="M0 0h30v26H0z M-1 10.500L31 1.500" /></clipPath></defs><g><path d="M5.500 1.500h5l-4.500 23.500h-5z" fill="#e93a6c"/><path d="M12 1.200h5l-4.500 23.800h-5z" fill="#2fd68a"/><path d="M18.500 0.900h5l-4.500 24.100h-5z" fill="#f1b52c"/><path d="M25 0.600h4.500l-4.500 24.400h-5z" fill="#33a9e6"/><path d="M2 9.200L30 2.200v2.600L1.500 12z" fill="#1f4a34"/></g></svg>
<svg class="a" style="left:499px;top:1043px" width="33" height="34" viewBox="0 0 33 34"><defs><linearGradient id="gpi" x1="0" y1="0" x2="1" y2="1"><stop offset="0" stop-color="#1a50b8"/><stop offset="0.500" stop-color="#2c7cd8"/><stop offset="1" stop-color="#8cd0ec"/></linearGradient></defs><g transform="rotate(-14 16 20)"><rect x="3" y="9.500" width="26" height="21" fill="#f4f4f4" stroke="#c8c8c8" stroke-width="0.600"/><rect x="5" y="11.500" width="22" height="17" fill="url(#gpi)"/><path d="M5 28.500l8-9l6 5l8-4v8z" fill="#2a8ccc" opacity="0.700"/><path d="M9 12l5 1l-3 5z" fill="#e8e8e8"/></g><path d="M27.500 1.500l3 1.500L12 32l-4-2z" fill="#e8d82a" stroke="#5a5a1a" stroke-width="0.500"/><path d="M26.500 4.500l2.500-3.500l2.500 1l-2 4z" fill="#c8c8c8"/><path d="M20.500 13L12.500 26.500l2 1l8-13.500z" fill="#222"/></svg>
<svg class="a" style="left:560px;top:1043px" width="33" height="32" viewBox="0 0 33 32"><defs><linearGradient id="gm" x1="0" y1="0" x2="1" y2="1"><stop offset="0" stop-color="#0a1aa8"/><stop offset="0.550" stop-color="#2848d8"/><stop offset="1" stop-color="#9cc0f4"/></linearGradient><linearGradient id="gk" x1="0" y1="0" x2="0" y2="1"><stop offset="0" stop-color="#8cc8f8"/><stop offset="1" stop-color="#3c8ce0"/></linearGradient></defs><path d="M6 1.500L31.500 4.500L30.500 25L5 21.500z" fill="#dcdcdc" stroke="#a8a8a8" stroke-width="0.600"/><path d="M8 3.500L29.500 6L28.700 22.500L7 19.500z" fill="url(#gm)"/><path d="M14 22.500l8 1l-1 4h-6z" fill="#c8c8c8"/><ellipse cx="18" cy="28.500" rx="8.500" ry="3" fill="#e0e0e0" stroke="#b0b0b0" stroke-width="0.500"/><rect x="0.800" y="7.500" width="22.500" height="9.500" rx="1.500" fill="url(#gk)" stroke="#d8ecfc" stroke-width="0.900" transform="rotate(-2 12 12)"/><path d="M3 10h18M3 12.300h18" stroke="#e8f4ff" stroke-width="1.100" stroke-dasharray="1.400 0.900"/><path d="M5 14.700h13" stroke="#e8f4ff" stroke-width="1.100"/></svg>
<svg class="a" style="left:622px;top:1044px" width="34" height="32" viewBox="0 0 34 32"><defs><linearGradient id="g2b" x1="0" y1="0" x2="1" y2="1"><stop offset="0" stop-color="#a8b8f4"/><stop offset="0.400" stop-color="#1428e0"/><stop offset="1" stop-color="#000890"/></linearGradient><linearGradient id="g2r" x1="0" y1="0" x2="1" y2="1"><stop offset="0" stop-color="#f8a8a8"/><stop offset="0.500" stop-color="#d81010"/><stop offset="1" stop-color="#700000"/></linearGradient></defs><path d="M7.500 1H28.500L22 23H1z" fill="url(#g2b)"/><path d="M14 11.500H33L26.500 31H7.500z" fill="url(#g2r)"/><text x="17.500" y="30" font-family="Liberation Serif,serif" font-style="italic" font-weight="bold" font-size="33" fill="#1a0808" text-anchor="middle" opacity="0.700">2</text><text x="16" y="29" font-family="Liberation Serif,serif" font-style="italic" font-weight="bold" font-size="33" fill="#fff" text-anchor="middle">2</text></svg>
<svg class="a" style="left:683.2px;top:1044.6px" width="29.8" height="29.8" viewBox="0 0 100 100"><defs><linearGradient id="gs" x1="0" y1="0" x2="0" y2="1"><stop offset="0" stop-color="#0e1a4a"/><stop offset="0.550" stop-color="#12306c"/><stop offset="1" stop-color="#2a7cc0"/></linearGradient></defs><circle cx="50" cy="50" r="50" fill="url(#gs)"/><circle cx="64" cy="36" r="15.500" fill="#e8ecf0"/><circle cx="64" cy="36" r="10" fill="#14285c"/><circle cx="64" cy="36" r="7.500" fill="#b8c0c8"/><path d="M0.500 47L28 58.500c3-2 7-2.500 10-1L51 40l14 11L46 64c0 7-6 12-12.500 11.500c-5.500-0.500-9.500-4-10.500-9L2 58z" fill="#e8ecf0"/><circle cx="33.500" cy="64.500" r="8.200" fill="#14306c"/><circle cx="33.500" cy="64.500" r="6" fill="none" stroke="#e8ecf0" stroke-width="2.500"/></svg>
<svg class="a" style="left:748px;top:1046px" width="30.5" height="25" viewBox="0 0 30.5 25"><defs><linearGradient id="gph" x1="0" y1="0" x2="0" y2="1"><stop offset="0" stop-color="#3c8cdc"/><stop offset="0.450" stop-color="#a8d4f0"/><stop offset="0.600" stop-color="#3a6a5a"/><stop offset="0.780" stop-color="#2c6ca0"/><stop offset="1" stop-color="#5aa0d8"/></linearGradient></defs><path d="M1 6V1h6M23.500 1h6v5M29.500 19v5h-6M7 24H1v-5" fill="none" stroke="#3c94e8" stroke-width="2"/><rect x="2.500" y="2.500" width="25.500" height="20" rx="3" fill="#f4f8fc"/><rect x="4" y="4" width="22.500" height="17" rx="2" fill="url(#gph)"/><path d="M4 13.500c4-5 8-5 11-2c3 2 7 2 11.500 2.500v2h-22.500z" fill="#35624e"/><path d="M16 5c3-1.500 7-1 9 0.500l-1 3c-3-1-5-1-8-0.500z" fill="#e8f2fa" opacity="0.850"/></svg>
<svg class="a" style="left:808.7px;top:1043.7px" width="32.4" height="32.2" viewBox="0 0 32.4 32.2"><rect width="32.400" height="32.200" fill="#f69a0e"/><path d="M9.500 8.500h17l-14 16h16" stroke="#8a4a08" stroke-width="5.500" fill="none" opacity="0.850"/><path d="M11 25.500h18l0 3h-18z" fill="#b86a0a" opacity="0.600"/><path d="M6.500 6.500h16.500l-14.500 16h16" stroke="#fbe8e8" stroke-width="6.200" fill="none" stroke-linejoin="miter"/><path d="M6.500 6.500h16.500l-14.500 16h16" stroke="#3c1478" stroke-width="4.200" fill="none" stroke-linejoin="miter"/></svg>
<!-- p_icons.icons -->
<svg class="a" style="left:10px;top:48px" width="16" height="16" viewBox="0 0 16 16"><path d="M3.5 2.5h6.5l3.5 3.5v8.5h-10z" fill="#fff" stroke="#000" stroke-width="1"/><path d="M10 2.5v3.5h3.5" fill="none" stroke="#000" stroke-width="1"/></svg>
<svg class="a" style="left:33px;top:48px" width="16" height="16" viewBox="0 0 16 16"><path d="M2 14.5V5.5h3.5l1 1.5H11v2" fill="#f4f490" stroke="#000" stroke-width="1"/><path d="M2 14.5l2.5-5.5H14.5l-2.5 5.5z" fill="#8c8c2a" stroke="#000" stroke-width="1"/><path d="M9.5 3.5c1.5-1.8 3.5-1.8 4.5 0.5" fill="none" stroke="#000" stroke-width="1"/><path d="M14.5 1.5v3h-3" fill="none" stroke="#000" stroke-width="1"/></svg>
<svg class="a" style="left:56px;top:48px" width="16" height="16" viewBox="0 0 16 16"><path d="M1.5 1.5h13v13h-12l-1-1z" fill="#84843c" stroke="#000" stroke-width="1"/><rect x="4" y="2" width="8" height="6" fill="#fff"/><rect x="4" y="10" width="8.5" height="4.5" fill="#000"/><rect x="9.5" y="11" width="2" height="3" fill="#fff"/><rect x="12.8" y="2.6" width="1" height="1.2" fill="#fff"/></svg>
<svg class="a" style="left:79px;top:48px" width="16" height="16" viewBox="0 0 16 16"><path d="M1.5 1.8C6 5 10.5 9.5 14.5 14.5M14.8 1C9.5 5 5 10 1.8 15" fill="none" stroke="#e01414" stroke-width="1.5"/><path d="M2.5 2.2L8 7.5M14 1.8L8.5 7" stroke="#e01414" stroke-width="0.8"/></svg>
<svg class="a" style="left:102px;top:48px" width="16" height="16" viewBox="0 0 16 16"><path d="M6.700 2.700h7.300l3 3v9.200h-10.300z" fill="#fff" stroke="#000" stroke-width="1.100"/><path d="M14 2.700v3h3" fill="none" stroke="#000" stroke-width="1"/><path d="M1 3.200H8.300L10.600 6.600L12.900 3.200V11.600H6.800V7H1z" fill="#0a0ae6"/><rect x="7.200" y="9.200" width="1" height="1" fill="#fff"/></svg>
<svg class="a" style="left:140px;top:48px" width="16" height="16" viewBox="0 0 16 16"><defs><linearGradient id="ex" x1="0" y1="0" x2="1" y2="0"><stop offset="0" stop-color="#ff0808"/><stop offset="0.550" stop-color="#e80808"/><stop offset="1" stop-color="#6a0000"/></linearGradient></defs><path d="M6.600 2.700h7.300l3 3v9.200h-10.300z" fill="#fff" stroke="#000" stroke-width="1.100"/><path d="M13.900 2.700v3h3" fill="none" stroke="#000" stroke-width="1"/><path d="M0.900 7L4.400 3.100V5C8 4.500 11 5.500 14.400 9.500L12.600 11.700C10 8.800 7.500 8.300 4.400 8.700V10.900z" fill="url(#ex)"/></svg>
<svg class="a" style="left:179px;top:48px" width="16" height="16" viewBox="0 0 16 16"><defs><radialGradient id="rb" cx="0.38" cy="0.35" r="0.7"><stop offset="0" stop-color="#fff"/><stop offset="0.22" stop-color="#ffb0b0"/><stop offset="0.55" stop-color="#e83838"/><stop offset="1" stop-color="#c01818"/></radialGradient></defs><circle cx="8" cy="8.5" r="7" fill="url(#rb)"/><circle cx="8" cy="8.5" r="6.8" fill="none" stroke="#d86060" stroke-width="0.8" stroke-dasharray="1.5 1.2"/></svg>
<svg class="a" style="left:202px;top:48px" width="16" height="16" viewBox="0 0 16 16"><rect x="0.5" y="1.5" width="15" height="14" rx="1" fill="#9a9a9a" stroke="#444" stroke-width="1"/><rect x="2" y="3" width="12" height="6.5" fill="#70d8e8"/><rect x="2" y="9.5" width="12" height="4.5" fill="#90903a"/><circle cx="12.2" cy="4.6" r="1.5" fill="#f8f020"/><path d="M6 14V3.5M3.5 6v3h2.5M8.5 5v3H6" stroke="#18c018" stroke-width="1.7" fill="none"/><path d="M2 14.5h12" stroke="#222" stroke-width="1"/></svg>
<svg class="a" style="left:225px;top:48px" width="16" height="16" viewBox="0 0 16 16"><path d="M5 11.5c1-4 4-6 6.5-5c2 0.8 2.6 3 1.8 5.2" fill="none" stroke="#0a0aa8" stroke-width="1.5"/><path d="M1.5 8.5l1 5.8l5.5-1.8z" fill="#0a0aa8"/></svg>
<svg class="a" style="left:248px;top:48px" width="16" height="16" viewBox="0 0 16 16"><rect x="2.5" y="1.5" width="12" height="14" fill="#fff" stroke="#1414a0" stroke-width="1.2"/><path d="M4.5 4.5h6M4.5 6.5h8M4.5 8.5h5M4.5 10.5h8M4.5 12.5h6" stroke="#1818c8" stroke-width="1"/></svg>
<svg class="a" style="left:271px;top:48px" width="16" height="16" viewBox="0 0 16 16"><path d="M11 11.5c-1-4-4-6-6.5-5c-2 0.8-2.6 3-1.8 5.2" fill="none" stroke="#b8b8b8" stroke-width="1.5"/><path d="M14.5 8.5l-1 5.8l-5.5-1.8z" fill="#b8b8b8"/></svg>
<svg class="a" style="left:10px;top:96px" width="16" height="16" viewBox="0 0 16 16"><path d="M4.500 8.500L9.500 3.500C12 1.500 15.500 4 14 7.500L9 12.800" fill="none" stroke="#9c9c9c" stroke-width="3.200"/><path d="M9.500 3.200C12 1.200 15.800 3.600 14.600 7" fill="none" stroke="#c8c8c8" stroke-width="1"/><path d="M2.200 8.600L6 5l2 2.200l-3.700 3.600z" fill="#e01414"/><path d="M6.500 12.800L10.200 9.200l2 2.200l-3.700 3.600z" fill="#e01414"/><path d="M2.600 9.500l2.200 2M6.900 13.700l2.200 2" stroke="#111" stroke-width="1.500"/><path d="M5.500 5.500l2 2M9.700 9.700l2 2" stroke="#111" stroke-width="1.100"/></svg>
<svg class="a" style="left:33px;top:96px" width="16" height="16" viewBox="0 0 16 16"><path d="M6 1l3.5 8.5L15.5 3" fill="none" stroke="#1818b0" stroke-width="1"/><path d="M2.5 12.5l12.5 3" stroke="#1818b0" stroke-width="1"/><rect x="8.200" y="8.200" width="2.400" height="2.400" fill="#fff" stroke="#c81010" stroke-width="0.900"/><rect x="1.200" y="11.200" width="2.400" height="2.400" fill="#fff" stroke="#c81010" stroke-width="0.900"/><rect x="13" y="13.800" width="2.400" height="2.200" fill="#fff" stroke="#c81010" stroke-width="0.900"/></svg>
<svg class="a" style="left:56px;top:96px" width="16" height="16" viewBox="0 0 16 16"><path d="M1 6l15 9.5M1 15.5L9 9M6.5 1l4 4.5l5-4.5" fill="none" stroke="#1818b0" stroke-width="1"/><rect x="7.800" y="8.800" width="2.400" height="2.400" fill="#fff" stroke="#c81010" stroke-width="0.900"/><rect x="9.800" y="4.800" width="2.400" height="2.400" fill="#fff" stroke="#c81010" stroke-width="0.900"/></svg>
<svg class="a" style="left:79px;top:96px" width="16" height="16" viewBox="0 0 16 16"><path d="M4.5 1v15M8.5 1v15M12.5 1v15M1 4.500h15M1 8.500h15M1 12.5h15" stroke="#c4c4c4" stroke-width="1"/><path d="M9.5 1l-1 6l6.500 9M1 12.5l7.5-5.5" fill="none" stroke="#1818b0" stroke-width="1"/><rect x="7.800" y="5.800" width="2.400" height="2.400" fill="#fff" stroke="#c81010" stroke-width="0.900"/></svg>
<svg class="a" style="left:112px;top:96px" width="16" height="16" viewBox="0 0 16 16"><defs><linearGradient id="cn" x1="0" y1="0" x2="1" y2="0"><stop offset="0" stop-color="#a0b0ff"/><stop offset="0.25" stop-color="#2030f0"/><stop offset="1" stop-color="#000090"/></linearGradient></defs><path d="M8 1L14 13c0 2.500-12 2.500-12 0z" fill="url(#cn)"/></svg>
<svg class="a" style="left:10px;top:120px" width="16" height="16" viewBox="0 0 16 16"><path d="M2.500 15L5 3.500h10.500M5 3.500l5.500 7.500" fill="none" stroke="#1818b0" stroke-width="1"/><rect x="3.500" y="2" width="3" height="3" fill="#fff" stroke="#d01010"/><rect x="9.500" y="9.500" width="3" height="3" fill="#d01010"/><rect x="14" y="2" width="2" height="3" fill="#fff" stroke="#1818b0"/><rect x="1" y="13.500" width="3" height="2.5" fill="#fff" stroke="#1818b0"/></svg>
<svg class="a" style="left:33px;top:120px" width="16" height="16" viewBox="0 0 16 16"><path d="M1.500 4.500h10v10h-10zM1.500 4.500l3.500-3h10l-3.500 3M15 1.500v10l-3.500 3" fill="#fff" stroke="#1414a0" stroke-width="1.2"/><path d="M2 5l9.5 9.500" stroke="#555" stroke-width="1"/><path d="M11.500 4.500l2-2" stroke="#d01010" stroke-width="1.600"/><rect x="10" y="3.500" width="3" height="3" fill="#fff" stroke="#d01010"/><rect x="13.500" y="10" width="2.500" height="3" fill="#fff" stroke="#1414a0"/></svg>
<svg class="a" style="left:56px;top:120px" width="16" height="16" viewBox="0 0 16 16"><path d="M1.500 4.500h10v10h-10zM1.500 4.500l3.500-3h10l-3.500 3M15 1.500v10l-3.500 3" fill="#fff" stroke="#1414a0" stroke-width="1.2"/><path d="M2 5l9.500 9.500" stroke="#555" stroke-width="1"/><path d="M11.500 4.500v10" stroke="#d01010" stroke-width="1.800"/><rect x="10" y="3" width="3" height="3" fill="#fff" stroke="#1414a0"/><rect x="13.500" y="10" width="2.500" height="3" fill="#fff" stroke="#1414a0"/></svg>
<svg class="a" style="left:79px;top:120px" width="16" height="16" viewBox="0 0 16 16"><path d="M1.500 4.500h10v10h-10zM1.500 4.500l3.500-3h10l-3.500 3M15 1.500v10l-3.500 3" fill="#fff" stroke="#000" stroke-width="1.6"/><path d="M2 5l9.500 9.500" stroke="#d01010" stroke-width="1.200"/><path d="M11.500 4.500v10" stroke="#d01010" stroke-width="1.200"/><path d="M11.500 4.500l3.500-3v10l-3.500 3z" fill="#777" stroke="#000"/><rect x="4" y="11" width="1.500" height="1.500" fill="#d01010"/><rect x="7" y="6" width="1.500" height="1.500" fill="#d01010"/></svg>
<svg class="a" style="left:103px;top:120px" width="16" height="16" viewBox="0 0 16 16"><path d="M1.500 4.500h10v10h-10zM1.500 4.500l3.500-3h10l-3.500 3M15 1.500v10l-3.500 3" fill="#f4e8ec" stroke="#d81414" stroke-width="1.2"/><path d="M2 5l9.500 9.500" stroke="#222" stroke-width="1.200"/></svg>
<svg class="a" style="left:11px;top:144px" width="16" height="16" viewBox="0 0 16 16"><path d="M2 1.500h4.500v4l-2 4zM2 1.500v4l2.500 4" fill="#ddd" stroke="#777" stroke-width="1"/><path d="M4 9.500L14.500 15.500L3 13z" fill="#f6c8c8" stroke="#d01010" stroke-width="1.200"/><path d="M5 11l6.500 3M4.500 9.500l2 5" stroke="#d01010" stroke-width="0.800"/><path d="M9 5.500l3.500-3.500l3.500 3.500z" fill="#777"/><path d="M9 7.500h7l-3.500 3.500z" fill="#0a0aa8"/></svg>
<svg class="a" style="left:34px;top:144px" width="16" height="16" viewBox="0 0 16 16"><path d="M2 1.500h4.500v4l-2 4zM2 1.500v4l2.500 4M4.200 1.500v5" fill="#f6d0d0" stroke="#c01010" stroke-width="1.200"/><path d="M4 9.500L14.500 15.500L3 13z" fill="#e4e4e4" stroke="#aaa" stroke-width="1"/><path d="M5 11l6.500 3" stroke="#aaa" stroke-width="0.800"/><path d="M9 5.500l3.500-3.500l3.500 3.500z" fill="#0a0aa8"/><path d="M9 7.500h7l-3.500 3.500z" fill="#999"/></svg>
<svg class="a" style="left:58px;top:144px" width="16" height="16" viewBox="0 0 16 16"><circle cx="8.500" cy="2.200" r="1.700" fill="#1414a0"/><path d="M8.500 4v5.500L6 15.500h2.500M8.500 9.500l3 2.500l-1 3.500h2M8.500 5.500L4.500 8.500M8.500 5.500l3.500 1.500l1.500-3.500" fill="none" stroke="#1414a0" stroke-width="1.500"/><path d="M9 5l1.500 4.500l2 2M12 2c1.500 1 1.500 3 0.500 4.500" fill="none" stroke="#c01010" stroke-width="1.200"/></svg>
<svg class="a" style="left:81px;top:144px" width="16" height="16" viewBox="0 0 16 16"><circle cx="3.500" cy="3" r="2" fill="#fff" stroke="#c01010" stroke-width="1.200"/><path d="M1.500 3h4M3.500 1v4" stroke="#c01010" stroke-width="0.800"/><path d="M8 2h5M8 4.500h7M9.500 1v5" stroke="#c01010" stroke-width="1.100"/><path d="M2 7.500h3.500v3.500l-1.500 4.500zM2 7.500v4l2 4M3.800 7.500v4" fill="#f6d0d0" stroke="#c01010" stroke-width="1.100"/><path d="M7.500 6.500l6 4M8 9l3 2.500" stroke="#333" stroke-width="1"/><path d="M7.500 16v-3.500l3.500-2.500h3l2 2.500v3.500z" fill="#0a0ae0"/><path d="M7.500 12.500l3.500-2.500h3" stroke="#000" stroke-width="1" fill="none"/></svg>
<!-- p_left.left -->
<svg class="a" style="left:408px;top:190px" width="712" height="321" viewBox="0 0 712 321"><path d="M0 223.5H712 M389.5 0V321" stroke="#a0a0a0" stroke-width="1"/><g shape-rendering="crispEdges"><clipPath id="cm"><polygon points="347.0,74.0 412.0,76.0 426.0,140.0 428.0,148.0 334.0,152.0"/></clipPath><polygon points="347.0,74.0 412.0,76.0 426.0,140.0 428.0,148.0 334.0,152.0" fill="#000" /><g clip-path="url(#cm)" fill="#fff"><polygon points="323.0,77.5 327.7,77.5 329.3,79.7 324.6,79.7"/><polygon points="329.9,77.5 334.6,77.5 336.2,79.7 331.5,79.7"/><polygon points="336.9,77.5 341.6,77.5 343.2,79.7 338.5,79.7"/><polygon points="343.8,77.5 348.5,77.5 350.1,79.7 345.4,79.7"/><polygon points="350.8,77.5 355.5,77.5 357.1,79.7 352.4,79.7"/><polygon points="357.7,77.5 362.4,77.5 364.0,79.7 359.3,79.7"/><polygon points="364.6,77.5 369.4,77.5 371.0,79.7 366.2,79.7"/><polygon points="371.6,77.5 376.3,77.5 377.9,79.7 373.2,79.7"/><polygon points="378.6,77.5 383.3,77.5 384.9,79.7 380.2,79.7"/><polygon points="385.5,77.5 390.2,77.5 391.8,79.7 387.1,79.7"/><polygon points="392.5,77.5 397.2,77.5 398.8,79.7 394.1,79.7"/><polygon points="399.4,77.5 404.1,77.5 405.7,79.7 401.0,79.7"/><polygon points="406.4,77.5 411.1,77.5 412.7,79.7 408.0,79.7"/><polygon points="413.3,77.5 418.0,77.5 419.6,79.7 414.9,79.7"/><polygon points="420.2,77.5 425.0,77.5 426.6,79.7 421.9,79.7"/><polygon points="427.2,77.5 431.9,77.5 433.5,79.7 428.8,79.7"/><polygon points="434.1,77.5 438.9,77.5 440.5,79.7 435.8,79.7"/><polygon points="441.1,77.5 445.8,77.5 447.4,79.7 442.7,79.7"/><polygon points="323.0,82.9 327.7,82.9 329.3,87.1 324.6,87.1"/><polygon points="329.9,82.9 334.6,82.9 336.2,87.1 331.5,87.1"/><polygon points="336.9,82.9 341.6,82.9 343.2,87.1 338.5,87.1"/><polygon points="343.8,82.9 348.5,82.9 350.1,87.1 345.4,87.1"/><polygon points="350.8,82.9 355.5,82.9 357.1,87.1 352.4,87.1"/><polygon points="357.7,82.9 362.4,82.9 364.0,87.1 359.3,87.1"/><polygon points="364.6,82.9 369.4,82.9 371.0,87.1 366.2,87.1"/><polygon points="371.6,82.9 376.3,82.9 377.9,87.1 373.2,87.1"/><polygon points="378.6,82.9 383.3,82.9 384.9,87.1 380.2,87.1"/><polygon points="385.5,82.9 390.2,82.9 391.8,87.1 387.1,87.1"/><polygon points="392.5,82.9 397.2,82.9 398.8,87.1 394.1,87.1"/><polygon points="399.4,82.9 404.1,82.9 405.7,87.1 401.0,87.1"/><polygon points="406.4,82.9 411.1,82.9 412.7,87.1 408.0,87.1"/><polygon points="413.3,82.9 418.0,82.9 419.6,87.1 414.9,87.1"/><polygon points="420.2,82.9 425.0,82.9 426.6,87.1 421.9,87.1"/><polygon points="427.2,82.9 431.9,82.9 433.5,87.1 428.8,87.1"/><polygon points="434.1,82.9 438.9,82.9 440.5,87.1 435.8,87.1"/><polygon points="441.1,82.9 445.8,82.9 447.4,87.1 442.7,87.1"/><polygon points="323.0,89.3 327.7,89.3 329.3,93.6 324.6,93.6"/><polygon points="329.9,89.3 334.6,89.3 336.2,93.6 331.5,93.6"/><polygon points="336.9,89.3 341.6,89.3 343.2,93.6 338.5,93.6"/><polygon points="343.8,89.3 348.5,89.3 350.1,93.6 345.4,93.6"/><polygon points="350.8,89.3 355.5,89.3 357.1,93.6 352.4,93.6"/><polygon points="357.7,89.3 362.4,89.3 364.0,93.6 359.3,93.6"/><polygon points="364.6,89.3 369.4,89.3 371.0,93.6 366.2,93.6"/><polygon points="371.6,89.3 376.3,89.3 377.9,93.6 373.2,93.6"/><polygon points="378.6,89.3 383.3,89.3 384.9,93.6 380.2,93.6"/><polygon points="385.5,89.3 390.2,89.3 391.8,93.6 387.1,93.6"/><polygon points="392.5,89.3 397.2,89.3 398.8,93.6 394.1,93.6"/><polygon points="399.4,89.3 404.1,89.3 405.7,93.6 401.0,93.6"/><polygon points="406.4,89.3 411.1,89.3 412.7,93.6 408.0,93.6"/><polygon points="413.3,89.3 418.0,89.3 419.6,93.6 414.9,93.6"/><polygon points="420.2,89.3 425.0,89.3 426.6,93.6 421.9,93.6"/><polygon points="427.2,89.3 431.9,89.3 433.5,93.6 428.8,93.6"/><polygon points="434.1,89.3 438.9,89.3 440.5,93.6 435.8,93.6"/><polygon points="441.1,89.3 445.8,89.3 447.4,93.6 442.7,93.6"/><polygon points="323.0,95.7 327.7,95.7 329.3,99.9 324.6,99.9"/><polygon points="329.9,95.7 334.6,95.7 336.2,99.9 331.5,99.9"/><polygon points="336.9,95.7 341.6,95.7 343.2,99.9 338.5,99.9"/><polygon points="343.8,95.7 348.5,95.7 350.1,99.9 345.4,99.9"/><polygon points="350.8,95.7 355.5,95.7 357.1,99.9 352.4,99.9"/><polygon points="357.7,95.7 362.4,95.7 364.0,99.9 359.3,99.9"/><polygon points="364.6,95.7 369.4,95.7 371.0,99.9 366.2,99.9"/><polygon points="371.6,95.7 376.3,95.7 377.9,99.9 373.2,99.9"/><polygon points="378.6,95.7 383.3,95.7 384.9,99.9 380.2,99.9"/><polygon points="385.5,95.7 390.2,95.7 391.8,99.9 387.1,99.9"/><polygon points="392.5,95.7 397.2,95.7 398.8,99.9 394.1,99.9"/><polygon points="399.4,95.7 404.1,95.7 405.7,99.9 401.0,99.9"/><polygon points="406.4,95.7 411.1,95.7 412.7,99.9 408.0,99.9"/><polygon points="413.3,95.7 418.0,95.7 419.6,99.9 414.9,99.9"/><polygon points="420.2,95.7 425.0,95.7 426.6,99.9 421.9,99.9"/><polygon points="427.2,95.7 431.9,95.7 433.5,99.9 428.8,99.9"/><polygon points="434.1,95.7 438.9,95.7 440.5,99.9 435.8,99.9"/><polygon points="441.1,95.7 445.8,95.7 447.4,99.9 442.7,99.9"/><polygon points="323.0,102.1 327.7,102.1 329.3,106.4 324.6,106.4"/><polygon points="329.9,102.1 334.6,102.1 336.2,106.4 331.5,106.4"/><polygon points="336.9,102.1 341.6,102.1 343.2,106.4 338.5,106.4"/><polygon points="343.8,102.1 348.5,102.1 350.1,106.4 345.4,106.4"/><polygon points="350.8,102.1 355.5,102.1 357.1,106.4 352.4,106.4"/><polygon points="357.7,102.1 362.4,102.1 364.0,106.4 359.3,106.4"/><polygon points="371.6,102.1 376.3,102.1 377.9,106.4 373.2,106.4"/><polygon points="378.6,102.1 383.3,102.1 384.9,106.4 380.2,106.4"/><polygon points="385.5,102.1 390.2,102.1 391.8,106.4 387.1,106.4"/><polygon points="392.5,102.1 397.2,102.1 398.8,106.4 394.1,106.4"/><polygon points="399.4,102.1 404.1,102.1 405.7,106.4 401.0,106.4"/><polygon points="406.4,102.1 411.1,102.1 412.7,106.4 408.0,106.4"/><polygon points="413.3,102.1 418.0,102.1 419.6,106.4 414.9,106.4"/><polygon points="420.2,102.1 425.0,102.1 426.6,106.4 421.9,106.4"/><polygon points="427.2,102.1 431.9,102.1 433.5,106.4 428.8,106.4"/><polygon points="434.1,102.1 438.9,102.1 440.5,106.4 435.8,106.4"/><polygon points="441.1,102.1 445.8,102.1 447.4,106.4 442.7,106.4"/><polygon points="323.0,108.5 327.7,108.5 329.3,112.8 324.6,112.8"/><polygon points="329.9,108.5 334.6,108.5 336.2,112.8 331.5,112.8"/><polygon points="336.9,108.5 341.6,108.5 343.2,112.8 338.5,112.8"/><polygon points="343.8,108.5 348.5,108.5 350.1,112.8 345.4,112.8"/><polygon points="350.8,108.5 355.5,108.5 357.1,112.8 352.4,112.8"/><polygon points="364.6,108.5 369.4,108.5 371.0,112.8 366.2,112.8"/><polygon points="371.6,108.5 376.3,108.5 377.9,112.8 373.2,112.8"/><polygon points="378.6,108.5 383.3,108.5 384.9,112.8 380.2,112.8"/><polygon points="385.5,108.5 390.2,108.5 391.8,112.8 387.1,112.8"/><polygon points="392.5,108.5 397.2,108.5 398.8,112.8 394.1,112.8"/><polygon points="399.4,108.5 404.1,108.5 405.7,112.8 401.0,112.8"/><polygon points="406.4,108.5 411.1,108.5 412.7,112.8 408.0,112.8"/><polygon points="413.3,108.5 418.0,108.5 419.6,112.8 414.9,112.8"/><polygon points="420.2,108.5 425.0,108.5 426.6,112.8 421.9,112.8"/><polygon points="427.2,108.5 431.9,108.5 433.5,112.8 428.8,112.8"/><polygon points="434.1,108.5 438.9,108.5 440.5,112.8 435.8,112.8"/><polygon points="441.1,108.5 445.8,108.5 447.4,112.8 442.7,112.8"/><polygon points="323.0,114.9 327.7,114.9 329.3,119.1 324.6,119.1"/><polygon points="329.9,114.9 334.6,114.9 336.2,119.1 331.5,119.1"/><polygon points="336.9,114.9 341.6,114.9 343.2,119.1 338.5,119.1"/><polygon points="343.8,114.9 348.5,114.9 350.1,119.1 345.4,119.1"/><polygon points="350.8,114.9 355.5,114.9 357.1,119.1 352.4,119.1"/><polygon points="357.7,114.9 362.4,114.9 364.0,119.1 359.3,119.1"/><polygon points="364.6,114.9 369.4,114.9 371.0,119.1 366.2,119.1"/><polygon points="371.6,114.9 376.3,114.9 377.9,119.1 373.2,119.1"/><polygon points="378.6,114.9 383.3,114.9 384.9,119.1 380.2,119.1"/><polygon points="385.5,114.9 390.2,114.9 391.8,119.1 387.1,119.1"/><polygon points="392.5,114.9 397.2,114.9 398.8,119.1 394.1,119.1"/><polygon points="399.4,114.9 404.1,114.9 405.7,119.1 401.0,119.1"/><polygon points="406.4,114.9 411.1,114.9 412.7,119.1 408.0,119.1"/><polygon points="413.3,114.9 418.0,114.9 419.6,119.1 414.9,119.1"/><polygon points="420.2,114.9 425.0,114.9 426.6,119.1 421.9,119.1"/><polygon points="427.2,114.9 431.9,114.9 433.5,119.1 428.8,119.1"/><polygon points="434.1,114.9 438.9,114.9 440.5,119.1 435.8,119.1"/><polygon points="441.1,114.9 445.8,114.9 447.4,119.1 442.7,119.1"/><polygon points="323.0,121.3 327.7,121.3 329.3,125.6 324.6,125.6"/><polygon points="329.9,121.3 334.6,121.3 336.2,125.6 331.5,125.6"/><polygon points="350.8,121.3 355.5,121.3 357.1,125.6 352.4,125.6"/><polygon points="357.7,121.3 362.4,121.3 364.0,125.6 359.3,125.6"/><polygon points="364.6,121.3 369.4,121.3 371.0,125.6 366.2,125.6"/><polygon points="371.6,121.3 376.3,121.3 377.9,125.6 373.2,125.6"/><polygon points="378.6,121.3 383.3,121.3 384.9,125.6 380.2,125.6"/><polygon points="385.5,121.3 390.2,121.3 391.8,125.6 387.1,125.6"/><polygon points="392.5,121.3 397.2,121.3 398.8,125.6 394.1,125.6"/><polygon points="399.4,121.3 404.1,121.3 405.7,125.6 401.0,125.6"/><polygon points="406.4,121.3 411.1,121.3 412.7,125.6 408.0,125.6"/><polygon points="413.3,121.3 418.0,121.3 419.6,125.6 414.9,125.6"/><polygon points="420.2,121.3 425.0,121.3 426.6,125.6 421.9,125.6"/><polygon points="427.2,121.3 431.9,121.3 433.5,125.6 428.8,125.6"/><polygon points="434.1,121.3 438.9,121.3 440.5,125.6 435.8,125.6"/><polygon points="441.1,121.3 445.8,121.3 447.4,125.6 442.7,125.6"/><polygon points="323.0,127.7 327.7,127.7 329.3,131.9 324.6,131.9"/><polygon points="329.9,127.7 334.6,127.7 336.2,131.9 331.5,131.9"/><polygon points="336.9,127.7 341.6,127.7 343.2,131.9 338.5,131.9"/><polygon points="350.8,127.7 355.5,127.7 357.1,131.9 352.4,131.9"/><polygon points="357.7,127.7 362.4,127.7 364.0,131.9 359.3,131.9"/><polygon points="364.6,127.7 369.4,127.7 371.0,131.9 366.2,131.9"/><polygon points="371.6,127.7 376.3,127.7 377.9,131.9 373.2,131.9"/><polygon points="378.6,127.7 383.3,127.7 384.9,131.9 380.2,131.9"/><polygon points="385.5,127.7 390.2,127.7 391.8,131.9 387.1,131.9"/><polygon points="392.5,127.7 397.2,127.7 398.8,131.9 394.1,131.9"/><polygon points="399.4,127.7 404.1,127.7 405.7,131.9 401.0,131.9"/><polygon points="406.4,127.7 411.1,127.7 412.7,131.9 408.0,131.9"/><polygon points="413.3,127.7 418.0,127.7 419.6,131.9 414.9,131.9"/><polygon points="420.2,127.7 425.0,127.7 426.6,131.9 421.9,131.9"/><polygon points="427.2,127.7 431.9,127.7 433.5,131.9 428.8,131.9"/><polygon points="434.1,127.7 438.9,127.7 440.5,131.9 435.8,131.9"/><polygon points="441.1,127.7 445.8,127.7 447.4,131.9 442.7,131.9"/><polygon points="323.0,134.1 327.7,134.1 329.3,138.4 324.6,138.4"/><polygon points="329.9,134.1 334.6,134.1 336.2,138.4 331.5,138.4"/><polygon points="350.8,134.1 355.5,134.1 357.1,138.4 352.4,138.4"/><polygon points="371.6,134.1 376.3,134.1 377.9,138.4 373.2,138.4"/><polygon points="378.6,134.1 383.3,134.1 384.9,138.4 380.2,138.4"/><polygon points="399.4,134.1 404.1,134.1 405.7,138.4 401.0,138.4"/><polygon points="406.4,134.1 411.1,134.1 412.7,138.4 408.0,138.4"/><polygon points="413.3,134.1 418.0,134.1 419.6,138.4 414.9,138.4"/><polygon points="420.2,134.1 425.0,134.1 426.6,138.4 421.9,138.4"/><polygon points="427.2,134.1 431.9,134.1 433.5,138.4 428.8,138.4"/><polygon points="441.1,134.1 445.8,134.1 447.4,138.4 442.7,138.4"/><polygon points="350.8,140.5 355.5,140.5 357.1,144.8 352.4,144.8"/><polygon points="371.6,140.5 376.3,140.5 377.9,144.8 373.2,144.8"/><polygon points="413.3,140.5 418.0,140.5 419.6,144.8 414.9,144.8"/><polygon points="329.9,146.9 334.6,146.9 336.2,151.1 331.5,151.1"/><polygon points="357.7,146.9 362.4,146.9 364.0,151.1 359.3,151.1"/><polygon points="364.6,146.9 369.4,146.9 371.0,151.1 366.2,151.1"/><polygon points="378.6,146.9 383.3,146.9 384.9,151.1 380.2,151.1"/><polygon points="399.4,146.9 404.1,146.9 405.7,151.1 401.0,151.1"/><polygon points="427.2,146.9 431.9,146.9 433.5,151.1 428.8,151.1"/><polygon points="434.1,146.9 438.9,146.9 440.5,151.1 435.8,151.1"/></g><polyline points="375.5,76.0 375.5,110.0" fill="none" stroke="#000" stroke-width="2.4"/><polygon points="341.4,73.0 348.4,73.0 333.8,153.0 326.6,153.0" fill="#000" /><polygon points="343.0,70.0 421.8,71.3 418.8,79.0 416.4,88.0 412.0,88.0 413.0,77.0 343.0,76.0" fill="#000" /><polygon points="413.0,73.0 420.0,73.0 418.0,78.0 414.0,78.0" fill="#fff" /><polygon points="341.8,64.0 351.3,64.0 349.4,69.0 348.0,70.5 345.0,70.5 343.6,69.0" fill="#000" /><polyline points="411.0,86.0 425.0,136.0" fill="none" stroke="#000" stroke-width="2.2"/><polyline points="414.5,93.0 427.5,137.0" fill="none" stroke="#000" stroke-width="1"/><polyline points="422.5,115.0 430.3,114.5 436.3,136.0" fill="none" stroke="#000" stroke-width="2"/><polyline points="424.0,117.0 430.0,136.0" fill="none" stroke="#000" stroke-width="1"/><polyline points="408.0,80.0 418.0,90.0" fill="none" stroke="#000" stroke-width="1"/><polyline points="418.0,80.0 410.0,90.0" fill="none" stroke="#000" stroke-width="1"/><polygon points="330.0,140.0 352.0,136.0 427.0,136.0 440.0,137.0 450.0,140.0 463.0,155.0 471.5,172.0 471.5,191.0 462.0,202.0 458.0,180.0 442.0,168.0 392.0,167.0 310.0,163.0 310.0,154.0 328.0,152.0" fill="#000" /><g fill="#fff"><rect x="448" y="147" width="4" height="1"/><rect x="443" y="164" width="2" height="1"/><rect x="463" y="161" width="2" height="2"/><rect x="449" y="148" width="2" height="1"/><rect x="356" y="141" width="1" height="1"/><rect x="434" y="142" width="1" height="2"/><rect x="385" y="162" width="1" height="1"/><rect x="392" y="153" width="1" height="2"/><rect x="446" y="146" width="2" height="1"/><rect x="423" y="149" width="1" height="1"/><rect x="345" y="142" width="4" height="1"/><rect x="371" y="142" width="3" height="1"/><rect x="413" y="147" width="1" height="1"/><rect x="393" y="162" width="4" height="2"/><rect x="386" y="149" width="2" height="2"/><rect x="342" y="140" width="1" height="2"/><rect x="355" y="148" width="1" height="1"/><rect x="334" y="142" width="1" height="1"/><rect x="414" y="140" width="1" height="2"/><rect x="353" y="145" width="2" height="1"/><rect x="396" y="141" width="2" height="2"/><rect x="396" y="147" width="1" height="1"/><rect x="424" y="152" width="1" height="1"/><rect x="353" y="153" width="1" height="1"/><rect x="461" y="162" width="4" height="1"/><rect x="401" y="163" width="2" height="1"/><rect x="363" y="161" width="1" height="1"/><rect x="440" y="159" width="1" height="1"/><rect x="401" y="148" width="1" height="1"/><rect x="437" y="151" width="1" height="1"/><rect x="392" y="164" width="2" height="1"/><rect x="344" y="141" width="2" height="1"/><rect x="378" y="152" width="3" height="1"/><rect x="345" y="156" width="4" height="1"/><rect x="396" y="143" width="4" height="1"/><rect x="345" y="164" width="4" height="2"/><rect x="355" y="166" width="1" height="1"/><rect x="411" y="151" width="4" height="1"/><rect x="405" y="139" width="4" height="1"/><rect x="402" y="164" width="2" height="1"/><rect x="441" y="144" width="2" height="1"/><rect x="372" y="145" width="3" height="1"/><rect x="368" y="150" width="1" height="1"/><rect x="394" y="154" width="2" height="1"/><rect x="403" y="153" width="1" height="2"/><rect x="353" y="142" width="3" height="1"/><rect x="406" y="147" width="3" height="2"/><rect x="436" y="141" width="3" height="1"/><rect x="366" y="146" width="1" height="2"/><rect x="407" y="159" width="2" height="1"/><rect x="414" y="152" width="3" height="1"/><rect x="424" y="151" width="3" height="2"/><rect x="400" y="145" width="3" height="1"/><rect x="454" y="163" width="1" height="2"/><rect x="352" y="141" width="2" height="1"/><rect x="343" y="145" width="1" height="1"/><rect x="421" y="160" width="1" height="1"/><rect x="353" y="163" width="2" height="1"/><rect x="431" y="141" width="2" height="1"/><rect x="463" y="161" width="1" height="2"/><rect x="389" y="148" width="1" height="1"/><rect x="337" y="154" width="2" height="1"/><rect x="384" y="152" width="2" height="1"/><rect x="349" y="164" width="1" height="1"/><rect x="345" y="146" width="1" height="1"/><rect x="422" y="164" width="2" height="1"/><rect x="404" y="152" width="2" height="1"/><rect x="346" y="140" width="4" height="1"/><rect x="389" y="140" width="1" height="1"/><rect x="438" y="140" width="1" height="1"/><rect x="368" y="141" width="1" height="1"/><rect x="453" y="155" width="1" height="1"/><rect x="456" y="165" width="2" height="1"/><rect x="358" y="164" width="4" height="1"/><rect x="403" y="144" width="2" height="1"/><rect x="369" y="161" width="1" height="1"/><rect x="336" y="152" width="1" height="2"/><rect x="366" y="151" width="4" height="2"/><rect x="419" y="153" width="2" height="1"/><rect x="423" y="166" width="2" height="1"/><rect x="442" y="158" width="4" height="1"/><rect x="387" y="148" width="1" height="1"/><rect x="336" y="156" width="2" height="1"/><rect x="400" y="165" width="3" height="1"/><rect x="424" y="139" width="1" height="1"/><rect x="369" y="138" width="2" height="1"/><rect x="366" y="165" width="2" height="1"/><rect x="380" y="138" width="2" height="1"/><rect x="396" y="152" width="1" height="1"/><rect x="400" y="138" width="2" height="1"/><rect x="458" y="162" width="1" height="2"/><rect x="441" y="158" width="3" height="2"/><rect x="402" y="152" width="1" height="1"/><rect x="345" y="139" width="4" height="1"/><rect x="393" y="139" width="1" height="1"/><rect x="398" y="138" width="1" height="1"/><rect x="420" y="140" width="4" height="2"/><rect x="367" y="140" width="2" height="1"/><rect x="429" y="144" width="4" height="2"/><rect x="398" y="149" width="2" height="1"/><rect x="344" y="142" width="2" height="1"/><rect x="415" y="142" width="2" height="1"/><rect x="397" y="165" width="1" height="1"/><rect x="422" y="146" width="3" height="1"/><rect x="394" y="151" width="1" height="1"/><rect x="375" y="140" width="2" height="1"/><rect x="372" y="140" width="3" height="2"/><rect x="453" y="164" width="1" height="1"/><rect x="352" y="153" width="2" height="1"/><rect x="349" y="148" width="2" height="2"/><rect x="385" y="142" width="2" height="2"/><rect x="383" y="141" width="2" height="1"/><rect x="376" y="147" width="2" height="1"/><rect x="342" y="149" width="3" height="1"/><rect x="381" y="150" width="2" height="1"/><rect x="370" y="139" width="4" height="1"/><rect x="417" y="142" width="2" height="2"/><rect x="400" y="143" width="2" height="2"/><rect x="449" y="161" width="4" height="2"/><rect x="453" y="164" width="3" height="1"/><rect x="428" y="139" width="4" height="2"/></g><rect x="337" y="144" width="6" height="8" fill="#fff"/><rect x="344" y="141" width="5" height="10" fill="#fff"/><rect x="364" y="146" width="10" height="3" fill="#fff"/><rect x="364" y="151" width="9" height="2" fill="#fff"/><rect x="400" y="164" width="14" height="1.5" fill="#fff"/><rect x="356" y="164" width="12" height="1.2" fill="#fff"/><rect x="410" y="162" width="22" height="1" fill="#fff"/><rect x="442" y="146" width="3" height="3" fill="#fff"/><rect x="448" y="151" width="4" height="2" fill="#fff"/><rect x="454" y="158" width="4" height="3" fill="#fff"/><rect x="458" y="165" width="4" height="3" fill="#fff"/><polyline points="440.0,138.0 458.0,150.0" fill="none" stroke="#fff" stroke-width="1"/><polyline points="442.2,140.1 459.6,152.8" fill="none" stroke="#fff" stroke-width="1"/><polyline points="444.5,142.2 461.2,155.5" fill="none" stroke="#fff" stroke-width="1"/><polyline points="446.8,144.4 462.9,158.2" fill="none" stroke="#fff" stroke-width="1"/><polyline points="449.0,146.5 464.5,161.0" fill="none" stroke="#fff" stroke-width="1"/><polyline points="451.2,148.6 466.1,163.8" fill="none" stroke="#fff" stroke-width="1"/><polyline points="453.5,150.8 467.8,166.5" fill="none" stroke="#fff" stroke-width="1"/><polyline points="455.8,152.9 469.4,169.2" fill="none" stroke="#fff" stroke-width="1"/><polyline points="458.0,155.0 471.0,172.0" fill="none" stroke="#fff" stroke-width="1"/><polyline points="440.0,137.5 450.0,140.0 463.0,155.0 471.5,172.0 458.0,172.0 444.0,155.0 440.0,137.5" fill="none" stroke="#000" stroke-width="1.6"/><polygon points="440.0,168.0 462.0,168.0 471.5,172.0 471.5,191.0 468.0,202.0 463.0,217.0 458.0,216.0 461.0,202.0 460.0,182.0 452.0,174.0 440.0,172.0" fill="#000" /><polyline points="473.5,190.0 473.5,218.5" fill="none" stroke="#000" stroke-width="1.4"/><polyline points="476.0,190.0 476.0,218.5" fill="none" stroke="#000" stroke-width="1.4"/><polyline points="468.0,194.0 476.0,194.0" fill="none" stroke="#000" stroke-width="1"/><polyline points="468.0,214.0 476.0,214.0" fill="none" stroke="#000" stroke-width="1"/><polyline points="469.0,205.0 476.0,211.0" fill="none" stroke="#000" stroke-width="1"/><polygon points="310.0,163.0 442.0,167.0 442.0,169.0 310.0,166.0" fill="#000" /><polyline points="389.5,167.0 389.5,198.0" fill="none" stroke="#000" stroke-width="2"/><polygon points="389.0,167.0 400.0,167.0 397.0,175.0 392.0,176.0" fill="#000" /><polyline points="375.0,184.5 389.0,182.0 440.0,168.0" fill="none" stroke="#000" stroke-width="1"/><polyline points="375.0,199.0 390.0,182.0" fill="none" stroke="#000" stroke-width="1"/><polyline points="375.0,184.5 390.0,198.0" fill="none" stroke="#000" stroke-width="1"/><polyline points="389.0,185.0 404.0,182.0" fill="none" stroke="#000" stroke-width="1"/><polyline points="389.0,198.0 402.0,188.0" fill="none" stroke="#000" stroke-width="1"/><polygon points="372.0,203.0 400.0,203.0 400.0,207.0 372.0,207.0" fill="#000" /><polyline points="375.0,191.0 389.0,196.0" fill="none" stroke="#000" stroke-width="1"/></g><g><circle cx="343.4" cy="203.7" r="31.7" fill="#000"/><circle cx="343.4" cy="203.7" r="23.4" fill="none" stroke="#fff" stroke-width="1.35" stroke-dasharray="1.5 1.5"/><circle cx="343.4" cy="203.7" r="21.2" fill="none" stroke="#fff" stroke-width="1.35" stroke-dasharray="1.4 1.6"/><circle cx="343.4" cy="203.7" r="19" fill="none" stroke="#fff" stroke-width="1.35" stroke-dasharray="1.6 1.4"/><circle cx="343.4" cy="203.7" r="16.8" fill="none" stroke="#fff" stroke-width="1.35" stroke-dasharray="1.4 1.8"/><rect x="337.4" y="197.7" width="7" height="1.5" fill="#fff"/><rect x="335.4" y="200.7" width="5" height="1.5" fill="#fff"/><rect x="341.4" y="200.7" width="6" height="1.5" fill="#fff"/><rect x="346.4" y="199.7" width="5" height="1.5" fill="#fff"/><rect x="336.4" y="207.7" width="6" height="1.5" fill="#fff"/><rect x="342.4" y="208.7" width="7" height="1.5" fill="#fff"/><rect x="346.4" y="210.7" width="5" height="1.5" fill="#fff"/><rect x="338.4" y="211.7" width="6" height="1.5" fill="#fff"/><rect x="340.4" y="193.7" width="5" height="1.5" fill="#fff"/><rect x="349.4" y="202.7" width="3" height="1.5" fill="#fff"/><rect x="339.4" y="196.7" width="1" height="4" fill="#fff" transform="rotate(25 339.4 196.7)"/><rect x="344.4" y="197.7" width="1" height="3" fill="#fff" transform="rotate(25 344.4 197.7)"/><rect x="348.4" y="198.7" width="1" height="4" fill="#fff" transform="rotate(25 348.4 198.7)"/><rect x="337.4" y="206.7" width="1" height="4" fill="#fff" transform="rotate(25 337.4 206.7)"/><rect x="343.4" y="207.7" width="1" height="5" fill="#fff" transform="rotate(25 343.4 207.7)"/><rect x="347.4" y="206.7" width="1" height="4" fill="#fff" transform="rotate(25 347.4 206.7)"/></g><g shape-rendering="crispEdges"></g><g><circle cx="429.8" cy="203.7" r="31.7" fill="#000"/><circle cx="429.8" cy="203.7" r="23.4" fill="none" stroke="#fff" stroke-width="1.35" stroke-dasharray="1.5 1.5"/><circle cx="429.8" cy="203.7" r="21.2" fill="none" stroke="#fff" stroke-width="1.35" stroke-dasharray="1.4 1.6"/><circle cx="429.8" cy="203.7" r="19" fill="none" stroke="#fff" stroke-width="1.35" stroke-dasharray="1.6 1.4"/><circle cx="429.8" cy="203.7" r="16.8" fill="none" stroke="#fff" stroke-width="1.35" stroke-dasharray="1.4 1.8"/><rect x="423.8" y="197.7" width="7" height="1.5" fill="#fff"/><rect x="421.8" y="200.7" width="5" height="1.5" fill="#fff"/><rect x="427.8" y="200.7" width="6" height="1.5" fill="#fff"/><rect x="432.8" y="199.7" width="5" height="1.5" fill="#fff"/><rect x="422.8" y="207.7" width="6" height="1.5" fill="#fff"/><rect x="428.8" y="208.7" width="7" height="1.5" fill="#fff"/><rect x="432.8" y="210.7" width="5" height="1.5" fill="#fff"/><rect x="424.8" y="211.7" width="6" height="1.5" fill="#fff"/><rect x="426.8" y="193.7" width="5" height="1.5" fill="#fff"/><rect x="435.8" y="202.7" width="3" height="1.5" fill="#fff"/><rect x="425.8" y="196.7" width="1" height="4" fill="#fff" transform="rotate(25 425.8 196.7)"/><rect x="430.8" y="197.7" width="1" height="3" fill="#fff" transform="rotate(25 430.8 197.7)"/><rect x="434.8" y="198.7" width="1" height="4" fill="#fff" transform="rotate(25 434.8 198.7)"/><rect x="423.8" y="206.7" width="1" height="4" fill="#fff" transform="rotate(25 423.8 206.7)"/><rect x="429.8" y="207.7" width="1" height="5" fill="#fff" transform="rotate(25 429.8 207.7)"/><rect x="433.8" y="206.7" width="1" height="4" fill="#fff" transform="rotate(25 433.8 206.7)"/></g><g shape-rendering="crispEdges"><polygon points="280.0,116.0 288.0,111.0 304.0,113.0 330.0,118.0 330.0,121.0 304.0,118.0 296.0,122.0 292.0,132.0 284.0,132.0 282.0,124.0" fill="#000" /><polygon points="271.0,125.0 275.0,123.0 280.0,128.0 284.0,127.0 286.0,134.0 282.0,140.0 280.0,155.0 282.0,195.0 270.0,195.0 266.0,185.0 269.0,155.0 271.0,140.0" fill="#000" /><g fill="#fff"><rect x="272" y="135" width="2" height="1"/><rect x="270" y="158" width="1" height="2"/><rect x="272" y="178" width="2" height="2"/><rect x="274" y="147" width="1" height="3"/><rect x="277" y="139" width="2" height="1"/><rect x="269" y="163" width="1" height="3"/><rect x="271" y="188" width="1" height="2"/><rect x="270" y="144" width="1" height="1"/><rect x="273" y="138" width="1" height="2"/><rect x="272" y="167" width="1" height="3"/><rect x="280" y="156" width="2" height="3"/><rect x="271" y="149" width="1" height="2"/><rect x="272" y="192" width="1" height="3"/><rect x="275" y="171" width="1" height="1"/><rect x="272" y="147" width="1" height="3"/><rect x="274" y="191" width="1" height="1"/><rect x="268" y="176" width="1" height="3"/><rect x="275" y="137" width="2" height="2"/><rect x="282" y="147" width="1" height="1"/><rect x="270" y="164" width="2" height="1"/><rect x="281" y="177" width="2" height="2"/><rect x="269" y="180" width="1" height="1"/><rect x="271" y="189" width="2" height="3"/><rect x="272" y="140" width="1" height="3"/><rect x="277" y="175" width="1" height="1"/><rect x="269" y="165" width="2" height="1"/><rect x="273" y="146" width="2" height="1"/><rect x="268" y="151" width="1" height="2"/><rect x="281" y="172" width="1" height="2"/><rect x="275" y="166" width="1" height="2"/><rect x="278" y="151" width="1" height="1"/><rect x="275" y="174" width="1" height="1"/><rect x="272" y="173" width="1" height="1"/><rect x="275" y="175" width="2" height="2"/><rect x="273" y="157" width="1" height="2"/><rect x="278" y="163" width="1" height="2"/><rect x="282" y="151" width="1" height="1"/><rect x="275" y="148" width="1" height="1"/><rect x="281" y="163" width="1" height="1"/><rect x="275" y="188" width="1" height="3"/><rect x="270" y="156" width="1" height="1"/><rect x="282" y="141" width="1" height="3"/><rect x="269" y="156" width="2" height="2"/><rect x="278" y="194" width="1" height="2"/><rect x="271" y="172" width="2" height="3"/><rect x="275" y="151" width="2" height="2"/><rect x="280" y="193" width="1" height="1"/><rect x="270" y="137" width="1" height="2"/><rect x="274" y="187" width="2" height="1"/><rect x="273" y="180" width="1" height="2"/><rect x="269" y="176" width="1" height="2"/><rect x="276" y="160" width="1" height="2"/><rect x="278" y="161" width="2" height="2"/><rect x="271" y="171" width="1" height="1"/><rect x="273" y="161" width="1" height="2"/><rect x="271" y="136" width="2" height="2"/><rect x="273" y="153" width="2" height="1"/><rect x="272" y="176" width="1" height="2"/><rect x="272" y="177" width="2" height="3"/><rect x="281" y="136" width="1" height="1"/><rect x="275" y="191" width="1" height="2"/><rect x="281" y="183" width="1" height="2"/><rect x="271" y="182" width="2" height="2"/><rect x="280" y="180" width="2" height="1"/><rect x="273" y="152" width="1" height="3"/><rect x="269" y="144" width="1" height="1"/><rect x="274" y="172" width="1" height="3"/><rect x="276" y="142" width="1" height="1"/><rect x="282" y="148" width="1" height="1"/><rect x="269" y="163" width="2" height="2"/><rect x="285" y="115" width="1" height="2"/><rect x="300" y="117" width="2" height="2"/><rect x="297" y="126" width="1" height="1"/><rect x="288" y="118" width="1" height="2"/><rect x="287" y="120" width="1" height="1"/><rect x="287" y="118" width="2" height="1"/><rect x="289" y="120" width="1" height="2"/><rect x="293" y="124" width="1" height="2"/><rect x="291" y="114" width="1" height="1"/><rect x="300" y="117" width="1" height="1"/><rect x="283" y="118" width="1" height="1"/><rect x="286" y="130" width="2" height="1"/><rect x="301" y="119" width="1" height="1"/><rect x="294" y="126" width="2" height="1"/><rect x="284" y="123" width="2" height="1"/><rect x="286" y="119" width="1" height="1"/><rect x="286" y="117" width="2" height="2"/><rect x="295" y="116" width="1" height="1"/><rect x="290" y="119" width="2" height="1"/><rect x="284" y="114" width="1" height="2"/><rect x="292" y="120" width="1" height="2"/><rect x="293" y="124" width="1" height="2"/><rect x="285" y="125" width="1" height="1"/><rect x="295" y="120" width="1" height="1"/><rect x="297" y="128" width="1" height="1"/><rect x="282" y="126" width="1" height="2"/><rect x="286" y="125" width="1" height="1"/><rect x="291" y="116" width="1" height="1"/><rect x="290" y="128" width="1" height="1"/><rect x="285" y="114" width="1" height="2"/></g><polyline points="288.0,111.0 332.0,118.5" fill="none" stroke="#000" stroke-width="1.5"/><polyline points="295.0,115.0 331.0,125.0" fill="none" stroke="#000" stroke-width="1.5"/><polyline points="298.0,120.0 329.0,131.0" fill="none" stroke="#000" stroke-width="2.2"/><polyline points="296.0,126.0 328.0,141.0" fill="none" stroke="#000" stroke-width="2.2"/><polyline points="304.0,114.0 330.0,128.0" fill="none" stroke="#000" stroke-width="1"/><polyline points="292.0,128.0 310.0,154.0" fill="none" stroke="#000" stroke-width="2"/><polyline points="286.0,132.0 292.0,162.0" fill="none" stroke="#000" stroke-width="2"/><polyline points="294.0,128.0 304.0,156.0" fill="none" stroke="#000" stroke-width="1"/><polyline points="297.2,128.8 307.2,155.5" fill="none" stroke="#000" stroke-width="1"/><polyline points="300.5,129.5 310.5,155.0" fill="none" stroke="#000" stroke-width="1"/><polyline points="303.8,130.2 313.8,154.5" fill="none" stroke="#000" stroke-width="1"/><polyline points="307.0,131.0 317.0,154.0" fill="none" stroke="#000" stroke-width="1"/><polyline points="310.2,131.8 320.2,153.5" fill="none" stroke="#000" stroke-width="1"/><polyline points="313.5,132.5 323.5,153.0" fill="none" stroke="#000" stroke-width="1"/><polyline points="316.8,133.2 326.8,152.5" fill="none" stroke="#000" stroke-width="1"/><polyline points="320.0,134.0 330.0,152.0" fill="none" stroke="#000" stroke-width="1"/><polyline points="282.0,136.0 292.0,182.0" fill="none" stroke="#000" stroke-width="1"/><polyline points="283.7,136.5 296.0,183.3" fill="none" stroke="#000" stroke-width="1"/><polyline points="285.3,137.0 300.0,184.7" fill="none" stroke="#000" stroke-width="1"/><polyline points="287.0,137.5 304.0,186.0" fill="none" stroke="#000" stroke-width="1"/><polyline points="288.7,138.0 308.0,187.3" fill="none" stroke="#000" stroke-width="1"/><polyline points="290.3,138.5 312.0,188.7" fill="none" stroke="#000" stroke-width="1"/><polyline points="292.0,139.0 316.0,190.0" fill="none" stroke="#000" stroke-width="1"/><polyline points="296.0,162.0 314.0,182.0" fill="none" stroke="#000" stroke-width="1"/><polyline points="297.2,162.0 314.8,183.0" fill="none" stroke="#000" stroke-width="1"/><polyline points="298.4,162.0 315.6,184.0" fill="none" stroke="#000" stroke-width="1"/><polyline points="299.6,162.0 316.4,185.0" fill="none" stroke="#000" stroke-width="1"/><polyline points="300.8,162.0 317.2,186.0" fill="none" stroke="#000" stroke-width="1"/><polyline points="302.0,162.0 318.0,187.0" fill="none" stroke="#000" stroke-width="1"/><polyline points="264.0,185.0 265.0,194.0 273.0,199.0 273.5,202.5 311.0,208.0" fill="none" stroke="#000" stroke-width="2.2"/><polyline points="276.0,199.5 312.0,181.0" fill="none" stroke="#000" stroke-width="1.8"/><polyline points="276.0,199.5 309.0,202.0" fill="none" stroke="#000" stroke-width="1.5"/><polyline points="282.0,160.0 323.0,160.0" fill="none" stroke="#000" stroke-width="1"/><polyline points="295.0,195.0 304.0,178.0 314.0,172.0 327.0,168.0" fill="none" stroke="#000" stroke-width="1.6"/><polyline points="282.0,162.0 294.0,200.0" fill="none" stroke="#000" stroke-width="1"/><polyline points="301.0,184.0 316.0,170.0" fill="none" stroke="#000" stroke-width="2.5"/><polyline points="306.0,202.0 312.0,186.0" fill="none" stroke="#000" stroke-width="2.2"/><polygon points="264.0,182.0 268.0,182.0 270.0,194.0 265.0,194.0" fill="#000" /></g><g><rect x="385" y="219" width="9" height="9" fill="#b87896" opacity="0.85"/><path d="M379.5 213.5l20 20M399.5 213.5l-20 20" stroke="#a06c84" stroke-width="0.9" opacity="0.8"/><path d="M389.5 223.5H413.5" stroke="#1414a0" stroke-width="1.2"/><path d="M389.5 223.5V199.5" stroke="#109020" stroke-width="1.2"/><rect x="388.5" y="222.5" width="2" height="2" fill="#1a0a10"/></g><path d="M10.5 270V310" stroke="#0a5a14" stroke-width="1"/><path d="M12 310.5H50" stroke="#101080" stroke-width="1"/><text x="10.5" y="266" font-family="Liberation Sans,sans-serif" font-weight="bold" font-size="11.5" fill="#0a8a14" text-anchor="middle">y</text><text x="10.5" y="315" font-family="Liberation Sans,sans-serif" font-weight="bold" font-size="11.5" fill="#d01010" text-anchor="middle">x</text><text x="60" y="315" font-family="Liberation Sans,sans-serif" font-weight="bold" font-size="11.5" fill="#1010c0" text-anchor="middle">z</text></svg>
<!-- p_back.back -->
<div class="a" style="left:1125px;top:190px;width:795px;height:321px;background-color:#fff;background-image:linear-gradient(90deg,#d9d9d9 0 1px,transparent 1px),linear-gradient(#d9d9d9 0 1px,transparent 1px),linear-gradient(90deg,#f0f0f0 0 1px,transparent 1px),linear-gradient(#f1f1f1 0 1px,transparent 1px);background-size:100px 100px,100px 100px,10px 10px,10px 10px;background-position:96px 0,0 60px,6px 0,0 0"></div><svg class="a" style="left:1125px;top:190px" width="795" height="321" viewBox="0 0 795 321"><path d="M0 160.5H795 M396.5 0V321" stroke="#9e9e9e" stroke-width="1"/><g><rect x="392" y="156" width="9" height="9" fill="#b87896" opacity="0.85"/><path d="M386.5 150.5l20 20M406.5 150.5l-20 20" stroke="#a06c84" stroke-width="0.9" opacity="0.8"/><path d="M396.5 160.5H372.5" stroke="#c01020" stroke-width="1.2"/><path d="M396.5 160.5V136.5" stroke="#109020" stroke-width="1.2"/><rect x="395.5" y="159.5" width="2" height="2" fill="#1a0a10"/></g><path d="M38.5 292V312" stroke="#0a6a14" stroke-width="1"/><path d="M15 312.5H38" stroke="#901018" stroke-width="1"/><text x="38.5" y="288.5" font-family="Liberation Sans,sans-serif" font-weight="bold" font-size="11.5" fill="#0a8a14" text-anchor="middle">y</text><text x="8.5" y="317" font-family="Liberation Sans,sans-serif" font-weight="bold" font-size="11.5" fill="#d01010" text-anchor="middle">x</text><text x="38.5" y="317" font-family="Liberation Sans,sans-serif" font-weight="bold" font-size="11.5" fill="#1010c0" text-anchor="middle">z</text></svg>
<!-- p_3d.model3d -->
<svg class="a" style="left:408px;top:542px" width="710" height="359" viewBox="0 0 710 359"><defs><linearGradient id="gt" x1="0" y1="0" x2="0" y2="1"><stop offset="0" stop-color="#bdbdbd"/><stop offset="1" stop-color="#9a9a9a"/></linearGradient><linearGradient id="gb" x1="1" y1="0" x2="0" y2="1"><stop offset="0" stop-color="#8a8a8a"/><stop offset="0.35" stop-color="#a0a0a0"/><stop offset="1" stop-color="#aeaeae"/></linearGradient><linearGradient id="gi" x1="1" y1="0" x2="0" y2="1"><stop offset="0" stop-color="#b4b4b4"/><stop offset="1" stop-color="#686868"/></linearGradient><linearGradient id="gf" x1="0" y1="0" x2="1" y2="0"><stop offset="0" stop-color="#a0a0a0"/><stop offset="1" stop-color="#adadad"/></linearGradient><radialGradient id="h1" cx="0.6" cy="0.35" r="0.8"><stop offset="0" stop-color="#8c181e"/><stop offset="0.6" stop-color="#5c0e12"/><stop offset="1" stop-color="#2a0608"/></radialGradient><radialGradient id="h2" cx="0.6" cy="0.35" r="0.8"><stop offset="0" stop-color="#8c181e"/><stop offset="0.6" stop-color="#5c0e12"/><stop offset="1" stop-color="#2a0608"/></radialGradient><linearGradient id="bg3" x1="0" y1="0" x2="0" y2="1"><stop offset="0" stop-color="#e7e7e7"/><stop offset="1" stop-color="#e0e0e0"/></linearGradient><clipPath id="cfm"><polygon points="255.0,50.6 281.0,50.0 282.0,98.0 274.0,150.0 224.0,159.0 244.8,66.6"/></clipPath><clipPath id="csm"><polygon points="301.0,44.4 374.0,50.6 370.0,54.0 380.0,114.0 352.0,126.0 322.0,138.0 286.0,149.0 294.0,98.0"/></clipPath></defs><rect width="710" height="359" fill="url(#bg3)"/><polygon points="205.0,139.5 184.0,147.0 170.0,169.0 159.0,196.0 155.5,205.0 156.0,220.0 160.0,229.0 168.0,237.0 182.0,240.0 192.0,218.0 217.0,188.0 232.0,163.0 232.0,144.0" fill="#a8a8a8" /><polyline points="205.5,140.0 184.5,147.5 171.0,169.5 160.0,196.5 157.0,206.0 157.5,220.0 161.0,229.0" fill="none" stroke="#cacaca" stroke-width="3.2" /><polyline points="188.0,151.0 175.0,172.0 164.0,198.0 161.5,210.0 162.5,226.0" fill="none" stroke="#8c8c8c" stroke-width="1.2" /><polygon points="175.0,221.0 192.0,214.0 216.0,226.0 216.9,269.0 192.4,255.1 189.0,270.0 179.6,257.7 177.5,239.1" fill="#151515" /><polyline points="199.8,243.9 206.0,250.0 215.3,255.6" fill="none" stroke="#b01c24" stroke-width="2.2" /><polyline points="201.0,241.5 208.0,247.5 216.0,252.0" fill="none" stroke="#5c1014" stroke-width="1" /><polygon points="198.0,234.0 210.0,236.0 210.0,244.0 199.0,241.0" fill="#a8a8a8" /><polyline points="180.5,220.0 172.5,238.0" fill="none" stroke="#c6c6c6" stroke-width="8.5" /><polyline points="178.5,219.0 170.5,237.0" fill="none" stroke="#eeeeee" stroke-width="2.6" /><polyline points="183.5,222.0 175.5,240.0" fill="none" stroke="#a4a4a4" stroke-width="1.5" /><polygon points="178.7,188.0 232.0,200.0 220.0,220.0 165.3,209.1" fill="#bababa" /><polygon points="165.3,209.1 220.0,220.0 213.7,236.0 173.2,217.3 166.0,215.0" fill="#aeaeae" /><polygon points="181.4,196.9 191.5,186.5 228.0,193.0 219.0,214.0" fill="#161616" /><polygon points="150.3,227.4 166.8,237.0 177.5,239.1 179.6,257.7 193.5,271.0 192.4,255.1 216.9,269.0 216.9,316.8 213.7,316.8 156.2,271.0" fill="#9c9c9c" /><polygon points="150.3,227.4 166.8,237.0 166.8,238.6 151.0,229.6" fill="#4a4a4a" /><polygon points="169.0,257.7 173.0,257.0 194.5,276.9 194.5,281.2 167.4,261.5" fill="#080808" /><polygon points="432.3,99.5 439.9,99.5 448.9,107.2 448.9,213.4 442.0,215.5 432.0,203.0 417.0,193.0 400.0,181.0 417.0,157.0 428.0,122.4" fill="url(#gt)" /><polygon points="432.3,99.5 439.9,99.5 434.0,113.0 428.0,122.4" fill="#8a8a8a" /><polygon points="247.0,165.0 292.0,150.0 328.0,170.0 359.0,186.0 412.0,174.0 417.0,193.0 392.0,203.0 357.0,218.0 327.0,220.0 292.0,230.0 252.0,250.0 232.0,258.0 222.0,233.0" fill="#9e9e9e" /><polygon points="322.0,216.0 360.0,202.0 364.0,240.0 334.0,250.0" fill="#1a1a1a" /><polygon points="432.3,99.5 387.8,114.1 292.0,147.4 247.6,161.3 242.0,174.0 328.1,169.7 389.2,144.7 429.5,121.0" fill="url(#gb)" /><polyline points="432.0,100.0 387.8,114.6 292.0,148.0" fill="none" stroke="#5e5e5e" stroke-width="1.2" /><polyline points="429.5,121.4 328.1,170.0" fill="none" stroke="#3a3a3a" stroke-width="1" stroke-dasharray="1.2 1"/><polygon points="428.1,122.4 417.0,155.8 394.8,161.3 393.4,146.0 389.2,144.7" fill="url(#gi)" /><polygon points="389.2,144.7 393.4,146.0 392.0,161.3 332.3,168.3" fill="#1e1e1e" /><polygon points="308.7,193.3 320.0,180.0 410.0,164.0 410.0,173.8 400.0,180.0" fill="#1c1c1c" /><polyline points="315.6,180.8 414.0,163.0" fill="none" stroke="#a2a2a2" stroke-width="5.5" /><polyline points="316.0,179.0 414.0,161.2" fill="none" stroke="#c6c6c6" stroke-width="1.4" /><polyline points="330.9,171.0 415.6,158.6" fill="none" stroke="#c0c0c0" stroke-width="2" /><polygon points="358.7,186.3 400.0,180.8 417.0,185.0 392.0,188.0" fill="#c6c6c6" /><g clip-path="url(#cfm)"><rect x="222" y="48" width="70" height="115" fill="#e6e6e6"/><polygon points="222.0,134.0 244.0,129.0 284.0,118.0 284.0,160.0 222.0,164.0" fill="#8c8c8c" /><polygon points="256.0,127.0 261.0,126.0 265.0,142.0 270.0,126.0 274.0,126.0 268.0,150.0 263.0,150.0" fill="#262626" /><polyline points="252.7,54.0 233.5,160.0" fill="none" stroke="#141414" stroke-width="1.7" /><polyline points="258.8,54.0 240.9,160.0" fill="none" stroke="#141414" stroke-width="1.7" /><polyline points="265.0,54.0 248.4,160.0" fill="none" stroke="#141414" stroke-width="1.7" /><polyline points="271.1,54.0 255.9,160.0" fill="none" stroke="#141414" stroke-width="1.7" /><polyline points="277.3,54.0 263.3,160.0" fill="none" stroke="#141414" stroke-width="1.7" /><polyline points="283.5,54.0 270.8,160.0" fill="none" stroke="#141414" stroke-width="1.7" /><polyline points="222.0,58.1 286.0,56.9" fill="none" stroke="#141414" stroke-width="1.7" /><polyline points="222.0,67.3 286.0,66.1" fill="none" stroke="#141414" stroke-width="1.7" /><polyline points="222.0,76.6 286.0,75.4" fill="none" stroke="#141414" stroke-width="1.7" /><polyline points="222.0,94.5 286.0,93.3" fill="none" stroke="#141414" stroke-width="1.7" /><polyline points="222.0,103.8 286.0,102.6" fill="none" stroke="#141414" stroke-width="1.7" /><polyline points="222.0,113.0 286.0,111.8" fill="none" stroke="#141414" stroke-width="1.7" /><polyline points="222.0,122.9 286.0,121.7" fill="none" stroke="#141414" stroke-width="1.7" /><polyline points="222.0,132.6 286.0,131.4" fill="none" stroke="#141414" stroke-width="1.7" /><polyline points="222.0,142.0 286.0,140.8" fill="none" stroke="#141414" stroke-width="1.7" /><polyline points="222.0,151.2 286.0,150.0" fill="none" stroke="#141414" stroke-width="1.7" /></g><g clip-path="url(#csm)"><rect x="284" y="42" width="100" height="115" fill="#8e8e8e"/><polygon points="332.0,55.0 362.0,55.0 366.0,83.0 336.0,83.0" fill="#9a9a9a" /><polygon points="286.0,104.0 320.0,101.0 378.0,102.4 384.0,120.0 286.0,154.0" fill="#3c3c3c" /><polygon points="320.0,102.0 352.0,98.0 356.0,110.0 322.0,116.0" fill="#555" /><polygon points="304.0,54.0 316.7,56.0 319.0,101.3 314.4,113.0 289.0,117.0 298.0,77.0" fill="#dedede" /><polygon points="287.8,117.0 314.4,113.0 313.0,137.0 286.0,142.0" fill="#8a8a8a" /><polygon points="316.7,56.5 324.8,56.5 330.6,99.0 320.0,101.5" fill="#141414" /><polyline points="310.3,44.7 297.6,148.0" fill="none" stroke="#161616" stroke-width="1.7" /><polyline points="318.2,45.3 308.1,144.0" fill="none" stroke="#161616" stroke-width="1.7" /><polyline points="326.0,46.0 318.7,140.0" fill="none" stroke="#161616" stroke-width="1.7" /><polyline points="333.8,46.7 329.2,136.0" fill="none" stroke="#161616" stroke-width="1.7" /><polyline points="341.7,47.3 339.8,132.0" fill="none" stroke="#161616" stroke-width="1.7" /><polyline points="349.5,48.0 350.3,128.0" fill="none" stroke="#161616" stroke-width="1.7" /><polyline points="357.3,48.7 360.9,124.0" fill="none" stroke="#161616" stroke-width="1.7" /><polyline points="365.2,49.3 371.4,120.0" fill="none" stroke="#161616" stroke-width="1.7" /><polyline points="300.8,56.0 374.0,57.3" fill="none" stroke="#161616" stroke-width="1.7" /><polyline points="299.1,68.0 375.0,64.7" fill="none" stroke="#161616" stroke-width="1.7" /><polyline points="297.3,80.0 376.0,72.0" fill="none" stroke="#161616" stroke-width="1.7" /><polyline points="295.6,92.0 377.0,79.3" fill="none" stroke="#161616" stroke-width="1.7" /><polyline points="293.9,104.0 378.0,86.7" fill="none" stroke="#161616" stroke-width="1.7" /><polyline points="292.2,116.0 379.0,94.0" fill="none" stroke="#161616" stroke-width="1.7" /><polyline points="290.4,128.0 380.0,101.3" fill="none" stroke="#161616" stroke-width="1.7" /><polyline points="288.7,140.0 381.0,108.7" fill="none" stroke="#161616" stroke-width="1.7" /><polyline points="305.8,54.2 294.3,116.0" fill="none" stroke="#111" stroke-width="1.7" /><polyline points="308.6,54.4 300.6,114.0" fill="none" stroke="#111" stroke-width="1.7" /><polyline points="311.4,54.6 306.9,112.0" fill="none" stroke="#111" stroke-width="1.7" /><polyline points="314.2,54.8 313.2,110.0" fill="none" stroke="#111" stroke-width="1.7" /><polyline points="301.8,58.9 317.2,59.1" fill="none" stroke="#111" stroke-width="1.7" /><polyline points="300.7,63.8 317.4,63.2" fill="none" stroke="#111" stroke-width="1.7" /><polyline points="299.5,68.8 317.6,67.2" fill="none" stroke="#111" stroke-width="1.7" /><polyline points="298.4,73.7 317.8,71.3" fill="none" stroke="#111" stroke-width="1.7" /><polyline points="297.2,78.6 318.0,75.4" fill="none" stroke="#111" stroke-width="1.7" /><polyline points="296.1,83.5 318.2,79.5" fill="none" stroke="#111" stroke-width="1.7" /><polyline points="294.9,88.5 318.3,83.5" fill="none" stroke="#111" stroke-width="1.7" /><polyline points="293.8,93.4 318.5,87.6" fill="none" stroke="#111" stroke-width="1.7" /><polyline points="292.6,98.3 318.7,91.7" fill="none" stroke="#111" stroke-width="1.7" /><polyline points="291.5,103.2 318.9,95.8" fill="none" stroke="#111" stroke-width="1.7" /><polyline points="290.3,108.2 319.1,99.8" fill="none" stroke="#111" stroke-width="1.7" /><polyline points="289.2,113.1 319.3,103.9" fill="none" stroke="#111" stroke-width="1.7" /><polyline points="293.4,117.0 291.0,144.8" fill="none" stroke="#111" stroke-width="1.6" /><polyline points="298.8,116.0 296.5,143.6" fill="none" stroke="#111" stroke-width="1.6" /><polyline points="304.2,115.0 302.0,142.4" fill="none" stroke="#111" stroke-width="1.6" /><polyline points="309.6,114.0 307.5,141.2" fill="none" stroke="#111" stroke-width="1.6" /><polyline points="287.4,125.0 314.5,119.8" fill="none" stroke="#111" stroke-width="1.6" /><polyline points="286.8,132.0 314.0,126.5" fill="none" stroke="#111" stroke-width="1.6" /><polyline points="286.1,139.0 313.5,133.2" fill="none" stroke="#111" stroke-width="1.6" /></g><polygon points="294.8,139.0 310.0,135.0 311.0,142.0 296.0,145.0" fill="#c81e1e" /><polygon points="283.7,146.0 288.0,145.0 288.0,150.0 284.0,150.5" fill="#e03020" /><polygon points="226.0,42.3 230.2,38.1 278.1,31.2 292.0,31.9 371.2,40.9 377.4,47.9 374.0,51.4 303.0,45.4 292.0,48.0 281.0,50.6 257.3,51.0 247.0,64.0 244.8,67.0 233.7,65.5" fill="#191919" /><polygon points="231.5,46.5 236.5,46.0 234.8,58.0" fill="#5a5a5a" /><polygon points="273.0,40.0 280.5,39.5 284.0,54.0" fill="#4e4e4e" /><polygon points="233.7,65.2 244.8,66.6 226.4,158.3 222.0,166.0 215.0,168.5" fill="#191919" /><polygon points="281.0,50.0 303.0,44.4 295.0,98.0 287.8,148.6 274.0,150.4 282.0,98.0" fill="#191919" /><polygon points="368.4,54.0 374.0,50.6 377.4,47.9 386.0,112.4 378.8,114.0" fill="#191919" /><polygon points="214.2,164.7 226.0,157.0 245.3,163.6 232.0,184.7 212.0,182.4" fill="#151515" /><polyline points="224.5,109.0 218.5,108.5 217.0,111.0 209.5,149.0 210.5,152.5 218.0,155.0" fill="none" stroke="#141414" stroke-width="1.6" /><polygon points="369.8,29.8 381.6,29.8 380.0,34.0 376.8,37.6 377.4,46.0 374.4,46.0 374.2,37.6 371.2,34.0" fill="#c8c4b8" /><polygon points="369.8,29.5 381.6,29.5 381.0,31.2 370.4,31.2" fill="#a8a498" /><polygon points="248.7,161.6 292.0,147.4 337.8,146.0 340.6,150.2 332.3,160.0 328.1,168.3 320.0,180.0 308.7,193.3 292.0,200.2 276.4,206.5 265.3,216.5 254.0,236.0 243.5,248.0 239.5,306.0 237.0,313.0 232.0,315.0 226.0,307.0 218.0,236.0 222.0,216.0 229.0,195.0 238.0,176.0" fill="url(#gf)" /><polyline points="337.8,146.0 340.6,150.2 332.3,160.0 328.1,168.3 320.0,180.0" fill="none" stroke="#8c8c8c" stroke-width="1" /><polyline points="282.5,173.5 304.5,163.2" fill="none" stroke="#8c8c8c" stroke-width="9.5" stroke-linecap="round"/><polyline points="282.5,172.3 304.5,162.0" fill="none" stroke="#bebebe" stroke-width="8.6" stroke-linecap="round"/><polygon points="308.4,190.8 332.0,183.8 332.0,188.0 308.4,195.0" fill="#1e1e1e" /><polygon points="276.4,204.7 308.4,197.7 308.4,199.6 282.0,204.6" fill="#2a2a2a" /><circle cx="316.7" cy="182.4" r="3.2" fill="#c8c8c8" stroke="#8a8a8a" stroke-width="0.8"/><circle cx="302.8" cy="193.6" r="3" fill="#c8c8c8" stroke="#8a8a8a" stroke-width="0.8"/><circle cx="269.5" cy="212.3" r="2.6" fill="#c8c8c8" stroke="#8a8a8a" stroke-width="0.8"/><circle cx="235.7" cy="308.0" r="3" fill="#c8c8c8" stroke="#8a8a8a" stroke-width="0.8"/><polyline points="248.7,161.6 238.0,176.0 229.0,195.5 222.0,217.0 218.0,236.0 219.5,263.0 223.0,288.0 226.0,303.0 231.0,313.0" fill="none" stroke="#c6c6c6" stroke-width="5.6" stroke-linejoin="round"/><polyline points="251.6,162.8 241.0,177.0 232.0,196.5 225.0,217.5 221.2,236.0 222.7,263.0 226.2,288.0 229.0,302.0" fill="none" stroke="#8c8c8c" stroke-width="1" /><polygon points="355.9,225.8 356.3,220.5 357.1,215.4 358.4,210.6 360.1,206.2 362.2,202.3 364.7,198.8 367.5,196.0 370.5,193.8 373.7,192.2 377.1,191.4 380.7,191.3 384.2,191.9 415.9,200.1 419.4,201.5 422.7,203.5 426.0,206.2 429.0,209.5 431.8,213.3 434.3,217.7 436.5,222.4 438.3,227.5 439.8,232.9 440.8,238.4 441.3,243.9 441.4,249.5 441.1,254.9 440.3,260.1 439.0,264.9 437.4,269.4 435.4,273.4 433.0,276.9 430.4,279.8 427.4,282.0 424.3,283.5 421.0,284.4 417.5,284.5 414.1,283.9 381.8,274.1 378.2,272.9 374.8,270.9 371.5,268.3 368.4,265.0 365.5,261.3 363.0,257.0 360.7,252.4 358.9,247.4 357.5,242.1 356.5,236.7 355.9,231.3" fill="#181818" /><rect x="353.5" y="223.9" width="3.6" height="3.6" fill="#151515" transform="rotate(-165 355.3 225.7)"/><rect x="354.1" y="217.6" width="3.6" height="3.6" fill="#151515" transform="rotate(-157 355.9 219.4)"/><rect x="355.3" y="211.5" width="3.6" height="3.6" fill="#151515" transform="rotate(-150 357.1 213.3)"/><rect x="357.3" y="205.5" width="3.6" height="3.6" fill="#151515" transform="rotate(-143 359.1 207.3)"/><rect x="360.1" y="200.0" width="3.6" height="3.6" fill="#151515" transform="rotate(-136 361.9 201.8)"/><rect x="364.0" y="195.1" width="3.6" height="3.6" fill="#151515" transform="rotate(-129 365.8 196.9)"/><rect x="368.9" y="191.2" width="3.6" height="3.6" fill="#151515" transform="rotate(-122 370.7 193.0)"/><rect x="374.8" y="189.1" width="3.6" height="3.6" fill="#151515" transform="rotate(-116 376.6 190.9)"/><rect x="381.0" y="189.3" width="3.6" height="3.6" fill="#151515" transform="rotate(-109 382.8 191.1)"/><rect x="387.1" y="190.7" width="3.6" height="3.6" fill="#151515" transform="rotate(-103 388.9 192.5)"/><rect x="393.2" y="192.3" width="3.6" height="3.6" fill="#151515" transform="rotate(-95 395.0 194.1)"/><rect x="399.2" y="193.8" width="3.6" height="3.6" fill="#151515" transform="rotate(-87 401.0 195.6)"/><rect x="405.3" y="195.4" width="3.6" height="3.6" fill="#151515" transform="rotate(-79 407.1 197.2)"/><rect x="411.4" y="197.0" width="3.6" height="3.6" fill="#151515" transform="rotate(-70 413.2 198.8)"/><rect x="417.4" y="199.0" width="3.6" height="3.6" fill="#151515" transform="rotate(-61 419.2 200.8)"/><rect x="422.7" y="202.4" width="3.6" height="3.6" fill="#151515" transform="rotate(-53 424.5 204.2)"/><rect x="427.1" y="206.7" width="3.6" height="3.6" fill="#151515" transform="rotate(-44 428.9 208.5)"/><rect x="430.9" y="211.8" width="3.6" height="3.6" fill="#151515" transform="rotate(-35 432.7 213.6)"/><rect x="433.9" y="217.3" width="3.6" height="3.6" fill="#151515" transform="rotate(-27 435.7 219.1)"/><rect x="436.2" y="223.1" width="3.6" height="3.6" fill="#151515" transform="rotate(-18 438.0 224.9)"/><rect x="438.1" y="229.2" width="3.6" height="3.6" fill="#151515" transform="rotate(-9 439.9 231.0)"/><rect x="439.3" y="235.3" width="3.6" height="3.6" fill="#151515" transform="rotate(-1 441.1 237.1)"/><rect x="440.0" y="241.6" width="3.6" height="3.6" fill="#151515" transform="rotate(8 441.8 243.4)"/><rect x="440.2" y="247.8" width="3.6" height="3.6" fill="#151515" transform="rotate(16 442.0 249.6)"/><rect x="439.7" y="254.1" width="3.6" height="3.6" fill="#151515" transform="rotate(23 441.5 255.9)"/><rect x="438.6" y="260.3" width="3.6" height="3.6" fill="#151515" transform="rotate(31 440.4 262.1)"/><rect x="436.7" y="266.2" width="3.6" height="3.6" fill="#151515" transform="rotate(38 438.5 268.0)"/><rect x="434.1" y="271.9" width="3.6" height="3.6" fill="#151515" transform="rotate(44 435.9 273.7)"/><rect x="430.3" y="276.9" width="3.6" height="3.6" fill="#151515" transform="rotate(51 432.1 278.7)"/><rect x="425.5" y="280.9" width="3.6" height="3.6" fill="#151515" transform="rotate(58 427.3 282.7)"/><rect x="419.7" y="283.1" width="3.6" height="3.6" fill="#151515" transform="rotate(65 421.5 284.9)"/><rect x="413.5" y="282.8" width="3.6" height="3.6" fill="#151515" transform="rotate(71 415.3 284.6)"/><rect x="407.4" y="281.2" width="3.6" height="3.6" fill="#151515" transform="rotate(77 409.2 283.0)"/><rect x="401.4" y="279.4" width="3.6" height="3.6" fill="#151515" transform="rotate(84 403.2 281.2)"/><rect x="395.4" y="277.6" width="3.6" height="3.6" fill="#151515" transform="rotate(92 397.2 279.4)"/><rect x="389.4" y="275.8" width="3.6" height="3.6" fill="#151515" transform="rotate(101 391.2 277.6)"/><rect x="383.4" y="274.0" width="3.6" height="3.6" fill="#151515" transform="rotate(110 385.2 275.8)"/><rect x="377.4" y="272.0" width="3.6" height="3.6" fill="#151515" transform="rotate(119 379.2 273.8)"/><rect x="371.9" y="269.0" width="3.6" height="3.6" fill="#151515" transform="rotate(127 373.7 270.8)"/><rect x="367.2" y="264.8" width="3.6" height="3.6" fill="#151515" transform="rotate(136 369.0 266.6)"/><rect x="363.3" y="259.9" width="3.6" height="3.6" fill="#151515" transform="rotate(144 365.1 261.7)"/><rect x="360.1" y="254.5" width="3.6" height="3.6" fill="#151515" transform="rotate(153 361.9 256.3)"/><rect x="357.6" y="248.7" width="3.6" height="3.6" fill="#151515" transform="rotate(162 359.4 250.5)"/><rect x="355.7" y="242.7" width="3.6" height="3.6" fill="#151515" transform="rotate(170 357.5 244.5)"/><rect x="354.4" y="236.6" width="3.6" height="3.6" fill="#151515" transform="rotate(179 356.2 238.4)"/><rect x="353.6" y="230.4" width="3.6" height="3.6" fill="#151515" transform="rotate(-173 355.4 232.2)"/><rect x="353.5" y="224.1" width="3.6" height="3.6" fill="#151515" transform="rotate(-165 355.3 225.9)"/><polyline points="411.2,280.3 398.4,273.7 385.6,273.1" fill="none" stroke="#262626" stroke-width="2.2" /><polyline points="402.1,276.8 389.3,270.2 376.5,269.6" fill="none" stroke="#262626" stroke-width="2.2" /><polyline points="394.1,268.9 381.3,262.3 368.5,261.7" fill="none" stroke="#262626" stroke-width="2.2" /><polyline points="387.9,257.6 375.1,251.0 362.3,250.4" fill="none" stroke="#262626" stroke-width="2.2" /><polyline points="384.5,244.3 371.7,237.7 358.9,237.1" fill="none" stroke="#262626" stroke-width="2.2" /><polyline points="384.1,230.5 371.3,223.9 358.5,223.3" fill="none" stroke="#262626" stroke-width="2.2" /><polyline points="386.9,218.0 374.1,211.4 361.3,210.8" fill="none" stroke="#262626" stroke-width="2.2" /><polyline points="392.5,208.2 379.7,201.6 366.9,201.0" fill="none" stroke="#262626" stroke-width="2.2" /><polyline points="400.2,202.3 387.4,195.7 374.6,195.1" fill="none" stroke="#262626" stroke-width="2.2" /><ellipse cx="415.0" cy="242.0" rx="26.0" ry="40.0" transform="rotate(-8 415.0 242.0)" fill="#161616" /><ellipse cx="416.0" cy="243.0" rx="22.4" ry="34.4" transform="rotate(-8 416.0 243.0)" fill="#1b1b1b" /><ellipse cx="415.0" cy="243.0" rx="15.6" ry="24.4" transform="rotate(-8 415.0 243.0)" fill="#b4222a" /><ellipse cx="416.2" cy="243.0" rx="14.0" ry="22.4" transform="rotate(-8 416.2 243.0)" fill="url(#h2)" /><ellipse cx="419.4" cy="241.0" rx="9.7" ry="20.5" transform="rotate(-8 419.4 241.0)" fill="none" stroke="#a01c24" stroke-width="1.2"/><polygon points="239.6,260.3 240.1,253.6 241.3,247.1 243.2,241.0 245.6,235.3 248.7,230.2 252.3,225.7 256.3,221.9 260.8,218.8 265.6,216.6 270.6,215.3 275.8,214.8 281.0,215.3 286.2,216.6 321.6,228.8 326.6,231.0 331.4,234.1 335.9,238.0 340.1,242.6 343.9,247.9 347.2,253.7 349.9,259.9 352.1,266.5 353.6,273.3 354.5,280.2 354.7,287.2 354.3,294.0 353.2,300.5 351.4,306.8 349.1,312.5 346.1,317.7 342.7,322.3 338.8,326.1 334.5,329.2 329.9,331.4 325.0,332.7 320.0,333.1 314.9,332.6 309.8,331.2 273.2,317.4 268.1,315.2 263.2,312.2 258.5,308.4 254.3,303.9 250.4,298.8 247.1,293.1 244.3,287.0 242.2,280.6 240.6,273.9 239.8,267.1" fill="#181818" /><rect x="237.2" y="258.3" width="3.6" height="3.6" fill="#151515" transform="rotate(-167 239.0 260.1)"/><rect x="237.7" y="252.1" width="3.6" height="3.6" fill="#151515" transform="rotate(-161 239.5 253.9)"/><rect x="238.8" y="245.9" width="3.6" height="3.6" fill="#151515" transform="rotate(-156 240.6 247.7)"/><rect x="240.5" y="239.9" width="3.6" height="3.6" fill="#151515" transform="rotate(-150 242.3 241.7)"/><rect x="242.9" y="234.1" width="3.6" height="3.6" fill="#151515" transform="rotate(-145 244.7 235.9)"/><rect x="246.0" y="228.7" width="3.6" height="3.6" fill="#151515" transform="rotate(-139 247.8 230.5)"/><rect x="249.8" y="223.8" width="3.6" height="3.6" fill="#151515" transform="rotate(-134 251.6 225.6)"/><rect x="254.4" y="219.5" width="3.6" height="3.6" fill="#151515" transform="rotate(-128 256.2 221.3)"/><rect x="259.6" y="216.1" width="3.6" height="3.6" fill="#151515" transform="rotate(-123 261.4 217.9)"/><rect x="265.4" y="213.8" width="3.6" height="3.6" fill="#151515" transform="rotate(-118 267.2 215.6)"/><rect x="271.5" y="212.7" width="3.6" height="3.6" fill="#151515" transform="rotate(-112 273.3 214.5)"/><rect x="277.8" y="212.8" width="3.6" height="3.6" fill="#151515" transform="rotate(-107 279.6 214.6)"/><rect x="283.9" y="214.1" width="3.6" height="3.6" fill="#151515" transform="rotate(-102 285.7 215.9)"/><rect x="289.8" y="216.1" width="3.6" height="3.6" fill="#151515" transform="rotate(-96 291.6 217.9)"/><rect x="295.7" y="218.1" width="3.6" height="3.6" fill="#151515" transform="rotate(-90 297.5 219.9)"/><rect x="301.7" y="220.1" width="3.6" height="3.6" fill="#151515" transform="rotate(-84 303.5 221.9)"/><rect x="307.6" y="222.1" width="3.6" height="3.6" fill="#151515" transform="rotate(-77 309.4 223.9)"/><rect x="313.5" y="224.2" width="3.6" height="3.6" fill="#151515" transform="rotate(-70 315.3 226.0)"/><rect x="319.5" y="226.2" width="3.6" height="3.6" fill="#151515" transform="rotate(-63 321.3 228.0)"/><rect x="325.2" y="228.8" width="3.6" height="3.6" fill="#151515" transform="rotate(-56 327.0 230.6)"/><rect x="330.4" y="232.2" width="3.6" height="3.6" fill="#151515" transform="rotate(-49 332.2 234.0)"/><rect x="335.1" y="236.4" width="3.6" height="3.6" fill="#151515" transform="rotate(-42 336.9 238.2)"/><rect x="339.2" y="241.1" width="3.6" height="3.6" fill="#151515" transform="rotate(-35 341.0 242.9)"/><rect x="342.9" y="246.2" width="3.6" height="3.6" fill="#151515" transform="rotate(-29 344.7 248.0)"/><rect x="345.9" y="251.7" width="3.6" height="3.6" fill="#151515" transform="rotate(-22 347.7 253.5)"/><rect x="348.5" y="257.4" width="3.6" height="3.6" fill="#151515" transform="rotate(-15 350.3 259.2)"/><rect x="350.5" y="263.3" width="3.6" height="3.6" fill="#151515" transform="rotate(-9 352.3 265.1)"/><rect x="352.0" y="269.4" width="3.6" height="3.6" fill="#151515" transform="rotate(-2 353.8 271.2)"/><rect x="352.9" y="275.6" width="3.6" height="3.6" fill="#151515" transform="rotate(4 354.7 277.4)"/><rect x="353.4" y="281.8" width="3.6" height="3.6" fill="#151515" transform="rotate(10 355.2 283.6)"/><rect x="353.3" y="288.1" width="3.6" height="3.6" fill="#151515" transform="rotate(16 355.1 289.9)"/><rect x="352.7" y="294.3" width="3.6" height="3.6" fill="#151515" transform="rotate(22 354.5 296.1)"/><rect x="351.5" y="300.4" width="3.6" height="3.6" fill="#151515" transform="rotate(27 353.3 302.2)"/><rect x="349.7" y="306.4" width="3.6" height="3.6" fill="#151515" transform="rotate(33 351.5 308.2)"/><rect x="347.2" y="312.1" width="3.6" height="3.6" fill="#151515" transform="rotate(38 349.0 313.9)"/><rect x="343.9" y="317.5" width="3.6" height="3.6" fill="#151515" transform="rotate(44 345.7 319.3)"/><rect x="339.9" y="322.3" width="3.6" height="3.6" fill="#151515" transform="rotate(49 341.7 324.1)"/><rect x="335.2" y="326.3" width="3.6" height="3.6" fill="#151515" transform="rotate(54 337.0 328.1)"/><rect x="329.8" y="329.4" width="3.6" height="3.6" fill="#151515" transform="rotate(60 331.6 331.2)"/><rect x="323.8" y="331.3" width="3.6" height="3.6" fill="#151515" transform="rotate(65 325.6 333.1)"/><rect x="317.6" y="331.8" width="3.6" height="3.6" fill="#151515" transform="rotate(70 319.4 333.6)"/><rect x="311.5" y="330.9" width="3.6" height="3.6" fill="#151515" transform="rotate(75 313.3 332.7)"/><rect x="305.5" y="329.1" width="3.6" height="3.6" fill="#151515" transform="rotate(80 307.3 330.9)"/><rect x="299.6" y="326.9" width="3.6" height="3.6" fill="#151515" transform="rotate(86 301.4 328.7)"/><rect x="293.8" y="324.7" width="3.6" height="3.6" fill="#151515" transform="rotate(92 295.6 326.5)"/><rect x="287.9" y="322.5" width="3.6" height="3.6" fill="#151515" transform="rotate(99 289.7 324.3)"/><rect x="282.0" y="320.3" width="3.6" height="3.6" fill="#151515" transform="rotate(106 283.8 322.1)"/><rect x="276.2" y="318.1" width="3.6" height="3.6" fill="#151515" transform="rotate(113 278.0 319.9)"/><rect x="270.3" y="315.8" width="3.6" height="3.6" fill="#151515" transform="rotate(120 272.1 317.6)"/><rect x="264.7" y="313.1" width="3.6" height="3.6" fill="#151515" transform="rotate(127 266.5 314.9)"/><rect x="259.5" y="309.6" width="3.6" height="3.6" fill="#151515" transform="rotate(134 261.3 311.4)"/><rect x="254.8" y="305.5" width="3.6" height="3.6" fill="#151515" transform="rotate(141 256.6 307.3)"/><rect x="250.7" y="300.7" width="3.6" height="3.6" fill="#151515" transform="rotate(147 252.5 302.5)"/><rect x="247.1" y="295.6" width="3.6" height="3.6" fill="#151515" transform="rotate(154 248.9 297.4)"/><rect x="244.1" y="290.1" width="3.6" height="3.6" fill="#151515" transform="rotate(160 245.9 291.9)"/><rect x="241.6" y="284.4" width="3.6" height="3.6" fill="#151515" transform="rotate(167 243.4 286.2)"/><rect x="239.7" y="278.4" width="3.6" height="3.6" fill="#151515" transform="rotate(173 241.5 280.2)"/><rect x="238.3" y="272.3" width="3.6" height="3.6" fill="#151515" transform="rotate(179 240.1 274.1)"/><rect x="237.5" y="266.1" width="3.6" height="3.6" fill="#151515" transform="rotate(-175 239.3 267.9)"/><rect x="237.3" y="259.8" width="3.6" height="3.6" fill="#151515" transform="rotate(-169 239.1 261.6)"/><polyline points="312.3,327.7 297.9,319.5 283.5,317.3" fill="none" stroke="#262626" stroke-width="2.2" /><polyline points="298.9,324.0 284.5,315.8 270.1,313.6" fill="none" stroke="#262626" stroke-width="2.2" /><polyline points="286.8,314.8 272.4,306.6 258.0,304.4" fill="none" stroke="#262626" stroke-width="2.2" /><polyline points="277.6,301.2 263.2,293.0 248.8,290.8" fill="none" stroke="#262626" stroke-width="2.2" /><polyline points="272.4,284.7 258.0,276.5 243.6,274.3" fill="none" stroke="#262626" stroke-width="2.2" /><polyline points="271.7,267.5 257.3,259.3 242.9,257.1" fill="none" stroke="#262626" stroke-width="2.2" /><polyline points="275.7,251.5 261.3,243.3 246.9,241.1" fill="none" stroke="#262626" stroke-width="2.2" /><polyline points="283.8,238.7 269.4,230.5 255.0,228.3" fill="none" stroke="#262626" stroke-width="2.2" /><polyline points="295.2,230.7 280.8,222.5 266.4,220.3" fill="none" stroke="#262626" stroke-width="2.2" /><ellipse cx="315.7" cy="280.0" rx="38.5" ry="50.0" transform="rotate(-10 315.7 280.0)" fill="#161616" /><ellipse cx="316.7" cy="281.0" rx="33.1" ry="43.0" transform="rotate(-10 316.7 281.0)" fill="#1b1b1b" /><ellipse cx="315.7" cy="281.0" rx="24.4" ry="31.0" transform="rotate(-10 315.7 281.0)" fill="#b4222a" /><ellipse cx="316.9" cy="281.0" rx="22.0" ry="28.5" transform="rotate(-10 316.9 281.0)" fill="url(#h1)" /><ellipse cx="322.5" cy="279.0" rx="15.1" ry="26.0" transform="rotate(-10 322.5 279.0)" fill="none" stroke="#a01c24" stroke-width="1.2"/><ellipse cx="302.4" cy="275.4" rx="6.2" ry="8.0" transform="rotate(-10 302.4 275.4)" fill="#0c0c0c" /><circle cx="309.6" cy="261.5" r="1.6" fill="#8a7a78"/><circle cx="313.4" cy="269.7" r="1.6" fill="#8a7a78"/><circle cx="310.2" cy="280.5" r="1.6" fill="#8a7a78"/><circle cx="302.4" cy="287.3" r="1.6" fill="#8a7a78"/><circle cx="295.0" cy="286.0" r="1.6" fill="#8a7a78"/><circle cx="408.5" cy="235.0" r="1.3" fill="#8a7a78"/><circle cx="406.5" cy="243.5" r="1.3" fill="#8a7a78"/><path d="M27.5 328V347.5" stroke="#0a4a10" stroke-width="1.2"/><path d="M13.6 344.3L24.7 346.3L27 347" stroke="#7a7a7a" stroke-width="1" fill="none"/><path d="M13 350.8L27.5 347.4" stroke="#0a0a50" stroke-width="1.1"/><text x="27.2" y="325.4" font-family="Liberation Sans,sans-serif" font-weight="bold" font-size="10.5" fill="#0a8a14" text-anchor="middle">y</text><text x="8.6" y="355.9" font-family="Liberation Sans,sans-serif" font-weight="bold" font-size="10.5" fill="#1010c0" text-anchor="middle">z</text><text x="9" y="347.7" font-family="Liberation Sans,sans-serif" font-weight="bold" font-size="10.5" fill="#d01010" text-anchor="middle">x</text></svg>
<!-- p_persp.persp -->
<svg class="a" style="left:1125px;top:542px" width="793" height="359" viewBox="0 0 793 359"><defs><radialGradient id="hl" gradientUnits="userSpaceOnUse" cx="97" cy="65" r="95" gradientTransform="translate(97 65) scale(1 0.72) translate(-97 -65)"><stop offset="0" stop-color="#6c181c"/><stop offset="0.45" stop-color="#531216"/><stop offset="0.8" stop-color="#2c090b"/><stop offset="1" stop-color="#0c0202"/></radialGradient><radialGradient id="hr" gradientUnits="userSpaceOnUse" cx="697.6" cy="65" r="95" gradientTransform="translate(697.6 65) scale(1 0.72) translate(-697.6 -65)"><stop offset="0" stop-color="#6c181c"/><stop offset="0.45" stop-color="#531216"/><stop offset="0.8" stop-color="#2c090b"/><stop offset="1" stop-color="#0c0202"/></radialGradient></defs><rect width="793" height="359" fill="#e3e3e3"/><polygon points="0.0,0.0 0.0,268.8 11.7,268.8 28.3,278.6 67.2,266.9 67.2,248.8 77.8,244.4 92.2,253.6 97.8,253.0 116.7,239.7 112.2,218.8 117.8,213.3 133.9,223.0 147.8,206.3 140.3,188.3 147.2,178.6 160.8,186.3 168.6,166.1 159.4,154.1 165.0,138.8 176.1,145.2 179.7,125.2 170.0,116.1 172.8,99.4 182.5,103.0 183.3,93.3 225.6,102.6 272.8,103.6 395.0,103.3 520.0,103.6 568.6,102.6 610.3,93.3 611.7,102.2 621.4,98.6 624.2,116.0 614.4,125.2 618.0,145.2 629.2,138.8 634.4,154.1 625.6,166.0 633.9,186.3 647.2,178.6 653.9,189.1 646.4,205.8 659.4,223.0 676.1,213.3 681.7,218.8 677.5,239.7 697.8,253.0 703.3,253.0 716.7,243.8 727.5,248.0 727.5,266.9 764.4,278.6 793.0,268.8 793.0,0.0" fill="#000"/><polygon points="0.0,16.0 21.0,24.0 81.0,48.0 0.0,47.0" fill="#0b0b0b"/><polygon points="793.0,16.0 772.0,24.0 713.0,48.0 793.0,47.0" fill="#0b0b0b"/><polygon points="39.8,61.1 105.0,61.1 114.7,62.6 129.3,68.9 142.9,74.7 141.4,83.0 134.1,105.3 124.4,120.9 106.9,135.5 87.5,140.8 71.9,140.8 46.6,130.6 29.2,124.8 12.6,111.2 28.2,95.6 37.9,76.2" fill="url(#hl)"/><polygon points="754.8,61.1 689.6,61.1 679.9,62.6 665.3,68.9 651.7,74.7 653.2,83.0 660.5,105.3 670.2,120.9 687.7,135.5 707.1,140.8 722.7,140.8 748.0,130.6 765.4,124.8 782.0,111.2 766.4,95.6 756.7,76.2" fill="url(#hr)"/><polyline points="38.9,72.3 72.9,61.1" fill="none" stroke="#0a0102" stroke-width="0.8"/><polyline points="755.7,72.3 721.7,61.1" fill="none" stroke="#0a0102" stroke-width="0.8"/><polyline points="37.9,74.2 104.0,76.7" fill="none" stroke="#0a0102" stroke-width="0.8"/><polyline points="756.7,74.2 690.6,76.7" fill="none" stroke="#0a0102" stroke-width="0.8"/><polyline points="28.2,95.6 104.0,76.7" fill="none" stroke="#0a0102" stroke-width="0.8"/><polyline points="766.4,95.6 690.6,76.7" fill="none" stroke="#0a0102" stroke-width="0.8"/><polyline points="36.9,97.1 87.5,99.5" fill="none" stroke="#0a0102" stroke-width="0.8"/><polyline points="757.7,97.1 707.1,99.5" fill="none" stroke="#0a0102" stroke-width="0.8"/><polyline points="12.6,111.7 93.3,101.0" fill="none" stroke="#0a0102" stroke-width="0.8"/><polyline points="782.0,111.7 701.3,101.0" fill="none" stroke="#0a0102" stroke-width="0.8"/><polyline points="105.0,61.1 104.0,76.7 95.2,101.0 79.7,118.9 63.2,128.7" fill="none" stroke="#0a0102" stroke-width="0.8"/><polyline points="689.6,61.1 690.6,76.7 699.4,101.0 714.9,118.9 731.4,128.7" fill="none" stroke="#0a0102" stroke-width="0.8"/><polyline points="114.7,62.6 116.6,81.0 106.9,106.3" fill="none" stroke="#0a0102" stroke-width="0.8"/><polyline points="679.9,62.6 678.0,81.0 687.7,106.3" fill="none" stroke="#0a0102" stroke-width="0.8"/><polyline points="129.3,68.9 116.6,81.0 95.2,101.0" fill="none" stroke="#0a0102" stroke-width="0.8"/><polyline points="665.3,68.9 678.0,81.0 699.4,101.0" fill="none" stroke="#0a0102" stroke-width="0.8"/><polyline points="111.8,62.6 104.5,73.3" fill="none" stroke="#0a0102" stroke-width="0.8"/><polyline points="682.8,62.6 690.1,73.3" fill="none" stroke="#0a0102" stroke-width="0.8"/><polyline points="104.0,76.7 116.6,81.0 141.4,81.5" fill="none" stroke="#0a0102" stroke-width="0.8"/><polyline points="690.6,76.7 678.0,81.0 653.2,81.5" fill="none" stroke="#0a0102" stroke-width="0.8"/><polyline points="141.4,83.0 106.9,106.3 79.7,118.9" fill="none" stroke="#0a0102" stroke-width="0.8"/><polyline points="653.2,83.0 687.7,106.3 714.9,118.9" fill="none" stroke="#0a0102" stroke-width="0.8"/><polyline points="95.2,101.0 106.9,106.3 134.1,106.3" fill="none" stroke="#0a0102" stroke-width="0.8"/><polyline points="699.4,101.0 687.7,106.3 660.5,106.3" fill="none" stroke="#0a0102" stroke-width="0.8"/><polyline points="133.1,108.3 87.5,128.7 71.9,140.8" fill="none" stroke="#0a0102" stroke-width="0.8"/><polyline points="661.5,108.3 707.1,128.7 722.7,140.8" fill="none" stroke="#0a0102" stroke-width="0.8"/><polyline points="79.7,118.9 87.5,128.7 116.6,128.7" fill="none" stroke="#0a0102" stroke-width="0.8"/><polyline points="714.9,118.9 707.1,128.7 678.0,128.7" fill="none" stroke="#0a0102" stroke-width="0.8"/><polyline points="19.4,115.1 68.0,117.2" fill="none" stroke="#0a0102" stroke-width="0.8"/><polyline points="775.2,115.1 726.6,117.2" fill="none" stroke="#0a0102" stroke-width="0.8"/><polyline points="36.9,120.4 68.0,119.4" fill="none" stroke="#0a0102" stroke-width="0.8"/><polyline points="757.7,120.4 726.6,119.4" fill="none" stroke="#0a0102" stroke-width="0.8"/><polyline points="105.4,106.3 87.5,128.7" fill="none" stroke="#0a0102" stroke-width="0.8"/><polyline points="689.2,106.3 707.1,128.7" fill="none" stroke="#0a0102" stroke-width="0.8"/><polyline points="54.4,130.6 87.5,128.7" fill="none" stroke="#0a0102" stroke-width="0.8"/><polyline points="740.2,130.6 707.1,128.7" fill="none" stroke="#0a0102" stroke-width="0.8"/><path d="M229 101.2h11M554 101.2h11" stroke="#8a8a8a" stroke-width="0.8"/><path d="M18 240L21 264" stroke="#0d0d0d" stroke-width="2.5"/><path d="M776.6 240L773.6 264" stroke="#0d0d0d" stroke-width="2.5"/><path d="M35 244L32 270" stroke="#0d0d0d" stroke-width="2.5"/><path d="M759.6 244L762.6 270" stroke="#0d0d0d" stroke-width="2.5"/><path d="M88 228L91 248" stroke="#0d0d0d" stroke-width="2.5"/><path d="M706.6 228L703.6 248" stroke="#0d0d0d" stroke-width="2.5"/><path d="M121 208L127 218" stroke="#0d0d0d" stroke-width="2.5"/><path d="M673.6 208L667.6 218" stroke="#0d0d0d" stroke-width="2.5"/><g><rect x="392" y="175.5" width="9" height="9" fill="#b87896" opacity="0.85"/><path d="M386.5 170l20 20M406.5 170l-20 20" stroke="#a06c84" stroke-width="0.9" opacity="0.8"/><path d="M396.5 180H372.5" stroke="#c81020" stroke-width="1.2"/><path d="M396.5 180V156" stroke="#109020" stroke-width="1.2"/><rect x="395.5" y="179" width="2" height="2" fill="#1a0a10"/></g><path d="M38.5 328V352" stroke="#0a6a14" stroke-width="1"/><path d="M15 351.5H38" stroke="#a01018" stroke-width="1"/><text x="38.5" y="326.5" font-family="Liberation Sans,sans-serif" font-weight="bold" font-size="11.5" fill="#0a8a14" text-anchor="middle">y</text><text x="8.5" y="356" font-family="Liberation Sans,sans-serif" font-weight="bold" font-size="11.5" fill="#d01010" text-anchor="middle">x</text><text x="38.5" y="356" font-family="Liberation Sans,sans-serif" font-weight="bold" font-size="11.5" fill="#1010c0" text-anchor="middle">z</text></svg>
</body></html>
